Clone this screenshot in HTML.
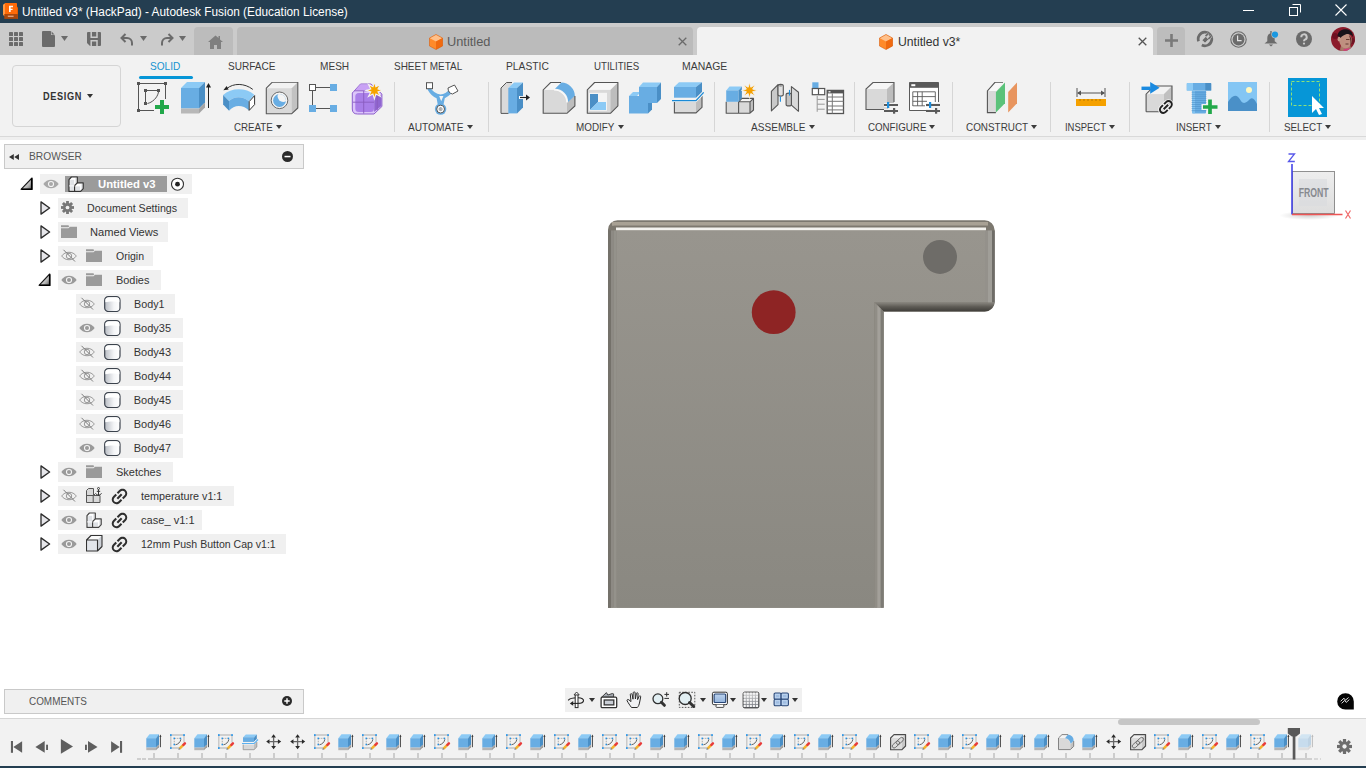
<!DOCTYPE html><html><head><meta charset="utf-8"><title>Fusion</title><style>
*{margin:0;padding:0;box-sizing:border-box}
html,body{width:1366px;height:768px;overflow:hidden;background:#fff;font-family:"Liberation Sans",sans-serif;position:relative}
.a{position:absolute;display:block}
.t{position:absolute;white-space:nowrap;line-height:1}
</style></head><body>
<div class="a" style="left:0px;top:0px;width:1366px;height:23px;background:#243e51;"></div>
<svg class="a" style="left:2px;top:2px" width="17" height="18" viewBox="0 0 17 18"><path d="M1 2.8L3 1.3V14.5L1 13Z" fill="#ff9a45"/><path d="M3 1H14.2Q15 1 15 1.8V13H3Z" fill="#ff6a08"/><path d="M15 4.5L16 5.5V16.8H15Z" fill="#e55d00"/><path d="M2.3 12H15.9V16.9H2.3Z" fill="#a9470c"/><path d="M7 3.7H11V5.2H8.7V6.7H10.6V8.1H8.7V10H7Z" fill="#fff6f0"/><path d="M5.8 13.6H11.6V15H5.8Z" fill="#e8b090" opacity="0.85"/></svg>
<div id="t0" class="t" style="left:22.34px;top:6px;font-size:12px;color:#ffffff;font-weight:normal;transform:scaleX(0.9866);transform-origin:0 0;">Untitled v3* (HackPad) - Autodesk Fusion (Education License)</div>
<div class="a" style="left:1243px;top:10px;width:11px;height:1px;background:#ffffff;"></div>
<svg class="a" style="left:1289px;top:4px" width="12" height="12" viewBox="0 0 12 12"><path d="M3.5 0.5H11.5V8.5" fill="none" stroke="#fff"/><rect x="0.5" y="3.5" width="8" height="8" fill="none" stroke="#fff"/></svg>
<svg class="a" style="left:1335px;top:4px" width="12" height="12" viewBox="0 0 12 12"><path d="M0.5 0.5L11.5 11.5M11.5 0.5L0.5 11.5" stroke="#fff" stroke-width="1.1"/></svg>
<div class="a" style="left:0px;top:23px;width:1366px;height:32px;background:#cbcbcb;"></div>
<svg class="a" style="left:9px;top:32px" width="14" height="14" viewBox="0 0 14 14"><rect x="0" y="0" width="4" height="4" rx="0.6" fill="#6b6b6b"/><rect x="0" y="5" width="4" height="4" rx="0.6" fill="#6b6b6b"/><rect x="0" y="10" width="4" height="4" rx="0.6" fill="#6b6b6b"/><rect x="5" y="0" width="4" height="4" rx="0.6" fill="#6b6b6b"/><rect x="5" y="5" width="4" height="4" rx="0.6" fill="#6b6b6b"/><rect x="5" y="10" width="4" height="4" rx="0.6" fill="#6b6b6b"/><rect x="10" y="0" width="4" height="4" rx="0.6" fill="#6b6b6b"/><rect x="10" y="5" width="4" height="4" rx="0.6" fill="#6b6b6b"/><rect x="10" y="10" width="4" height="4" rx="0.6" fill="#6b6b6b"/></svg>
<svg class="a" style="left:42px;top:31px" width="13" height="16" viewBox="0 0 13 16"><path d="M1 0H8.5L13 4.5V15a1 1 0 0 1-1 1H1a1 1 0 0 1-1-1V1a1 1 0 0 1 1-1Z" fill="#6b6b6b"/><path d="M9 0.3V4H12.7Z" fill="#cbcbcb"/><path d="M9.6 0.6L12.4 3.4H9.6Z" fill="#6b6b6b"/></svg>
<svg class="a" style="left:61px;top:36px" width="7" height="5" viewBox="0 0 7 5"><path d="M0 0H7L3.5 5Z" fill="#6b6b6b"/></svg>
<svg class="a" style="left:87px;top:32px" width="14" height="14" viewBox="0 0 14 14"><path d="M1 0H13a1 1 0 0 1 1 1V13a1 1 0 0 1-1 1H3L0 11V1a1 1 0 0 1 1-1Z" fill="#6b6b6b"/><path d="M4.2 0V5.3H10V0" fill="none" stroke="#cbcbcb" stroke-width="1.5"/><path d="M4.2 14V8.8H10V14" fill="none" stroke="#cbcbcb" stroke-width="1.5"/></svg>
<svg class="a" style="left:120px;top:33px" width="14" height="13" viewBox="0 0 14 13"><path d="M12 12.5V10A5 5 0 0 0 7 5H2" fill="none" stroke="#6b6b6b" stroke-width="2"/><path d="M5.5 1L1.5 5L5.5 9" fill="none" stroke="#6b6b6b" stroke-width="2"/></svg>
<svg class="a" style="left:140px;top:36px" width="7" height="5" viewBox="0 0 7 5"><path d="M0 0H7L3.5 5Z" fill="#6b6b6b"/></svg>
<svg class="a" style="left:160px;top:33px" width="14" height="13" viewBox="0 0 14 13"><path d="M2 12.5V10A5 5 0 0 1 7 5H12" fill="none" stroke="#6b6b6b" stroke-width="2"/><path d="M8.5 1L12.5 5L8.5 9" fill="none" stroke="#6b6b6b" stroke-width="2"/></svg>
<svg class="a" style="left:179px;top:36px" width="7" height="5" viewBox="0 0 7 5"><path d="M0 0H7L3.5 5Z" fill="#6b6b6b"/></svg>
<div class="a" style="left:194px;top:27px;width:39px;height:28px;background:#bcbcbc;border-radius:4px 4px 0 0"></div>
<svg class="a" style="left:208px;top:35px" width="15" height="14" viewBox="0 0 15 14"><path d="M7.5 0.5L0 7H2V14H6V10H9V14H13V7H15L12 4.4V1H10.5V3.1Z" fill="#7f7f7f"/></svg>
<div class="a" style="left:237px;top:27px;width:456px;height:28px;background:#bbbbbb;border-radius:4px 4px 0 0"></div>
<svg class="a" style="left:429px;top:34px" width="14" height="16" viewBox="0 0 14 16"><path d="M7 0.5L13.5 4V12L7 15.5L0.5 12V4Z" fill="#ff8a2a"/><path d="M7 0.5L13.5 4L7 7.5L0.5 4Z" fill="#ffc08a"/><path d="M7 7.5L13.5 4V12L7 15.5Z" fill="#f06a10"/><path d="M7 0.5L13.5 4V12L7 15.5L0.5 12V4Z" fill="none" stroke="#d86010" stroke-width="0.6"/></svg>
<div id="t1" class="t" style="left:447.48px;top:36px;font-size:12.5px;color:#5a5a5a;font-weight:normal;transform:scaleX(1.0247);transform-origin:0 0;">Untitled</div>
<svg class="a" style="left:677.5px;top:36.5px" width="9" height="9" viewBox="0 0 9 9"><path d="M0.7 0.7L8.3 8.3M8.3 0.7L0.7 8.3" stroke="#6a6a6a" stroke-width="1.3"/></svg>
<div class="a" style="left:697px;top:27px;width:456px;height:28px;background:#f2f2f2;border-radius:4px 4px 0 0"></div>
<svg class="a" style="left:879px;top:34px" width="14" height="16" viewBox="0 0 14 16"><path d="M7 0.5L13.5 4V12L7 15.5L0.5 12V4Z" fill="#ff8a2a"/><path d="M7 0.5L13.5 4L7 7.5L0.5 4Z" fill="#ffc08a"/><path d="M7 7.5L13.5 4V12L7 15.5Z" fill="#f06a10"/><path d="M7 0.5L13.5 4V12L7 15.5L0.5 12V4Z" fill="none" stroke="#d86010" stroke-width="0.6"/></svg>
<div id="t2" class="t" style="left:897.62px;top:36px;font-size:12.5px;color:#333;font-weight:normal;transform:scaleX(0.9756);transform-origin:0 0;">Untitled v3*</div>
<svg class="a" style="left:1137.5px;top:36.5px" width="9" height="9" viewBox="0 0 9 9"><path d="M0.7 0.7L8.3 8.3M8.3 0.7L0.7 8.3" stroke="#555" stroke-width="1.3"/></svg>
<div class="a" style="left:1157px;top:27px;width:28px;height:28px;background:#bdbdbd;border-radius:4px 4px 0 0"></div>
<svg class="a" style="left:1165px;top:34px" width="13" height="13" viewBox="0 0 13 13"><path d="M6.5 0V13M0 6.5H13" stroke="#7a7a7a" stroke-width="2.6"/></svg>
<svg class="a" style="left:1196px;top:30px" width="18" height="18" viewBox="0 0 18 18"><path d="M2.61 11.33A6.8 6.8 0 1 1 5.81 15.00" fill="none" stroke="#6b6b6b" stroke-width="2.7"/><path d="M6 10.2L9.8 6.4L12.8 9.4L9 13.2Z" fill="#6b6b6b" stroke="#cbcbcb" stroke-width="0.9"/><path d="M9.6 6.2L12.4 3.4M12.4 9L15.2 6.2" stroke="#cbcbcb" stroke-width="2.6"/><path d="M9.6 6.2L12.4 3.4M12.4 9L15.2 6.2" stroke="#6b6b6b" stroke-width="1.7"/></svg>
<svg class="a" style="left:1230px;top:31px" width="17" height="17" viewBox="0 0 17 17"><circle cx="8.5" cy="8.5" r="7.7" fill="none" stroke="#6b6b6b" stroke-width="1.1"/><circle cx="8.5" cy="8.5" r="5.9" fill="#6b6b6b"/><path d="M7.6 4.6V9.6H11.6" fill="none" stroke="#e4e4e4" stroke-width="1.2"/></svg>
<svg class="a" style="left:1263px;top:30px" width="17" height="18" viewBox="0 0 17 18"><path d="M8 3.2C5.5 3.5 4.3 5.6 4.3 8V11.2L1.5 13.6H14.5L11.7 11.2V8C11.7 5.6 10.5 3.5 8 3.2Z" fill="#6b6b6b"/><rect x="7.3" y="1" width="1.4" height="3" fill="#6b6b6b"/><path d="M5.8 14.5H10.2L8 16.6Z" fill="#6b6b6b"/><circle cx="12" cy="4.6" r="3.6" fill="#cbcbcb"/><circle cx="12" cy="4.6" r="3.1" fill="#1b98e0"/></svg>
<svg class="a" style="left:1296px;top:31px" width="16" height="16" viewBox="0 0 16 16"><circle cx="8" cy="8" r="8" fill="#6b6b6b"/><path d="M5.3 6.2A2.7 2.7 0 1 1 8.9 8.6C8.2 9 8 9.4 8 10.3" fill="none" stroke="#cbcbcb" stroke-width="2"/><circle cx="8" cy="12.6" r="1.1" fill="#cbcbcb"/></svg>
<svg class="a" style="left:1331px;top:27px" width="24" height="24" viewBox="0 0 24 24"><defs><clipPath id="avc"><circle cx="12" cy="12" r="12"/></clipPath></defs><g clip-path="url(#avc)"><rect width="24" height="24" fill="#8c1b2b"/><circle cx="4" cy="9" r="3" fill="#6e1020"/><circle cx="21" cy="14" r="3" fill="#701424"/><path d="M9 25C9 20 10 18 12 17H19C20 19 21 22 21 25Z" fill="#a87868"/><path d="M13 22L20 21L22 25H12Z" fill="#d23c7c"/><ellipse cx="14.5" cy="13.5" rx="6.2" ry="7.8" fill="#bf9080"/><path d="M18 8C21 10 21 17 19 21C20 17 19.5 12 18 8Z" fill="#5a2a28"/><ellipse cx="8.2" cy="12.2" rx="1.6" ry="2.4" fill="#c49888"/><path d="M6.5 9C7 3.5 12 1.5 16.5 2.5C20 3.2 22 6 22 10C20 7 17 6.5 14.5 7.5C12 8.5 11 9 9.5 11C9 10 8 9.5 6.5 9Z" fill="#18131a"/><path d="M15 12.5H18.5M14.5 17H17.5" stroke="#5a3028" stroke-width="0.9"/></g></svg>
<div class="a" style="left:0px;top:55px;width:1366px;height:82px;background:#f2f2f2;"></div>
<div class="a" style="left:0px;top:136px;width:1366px;height:1px;background:#d9d9d9;"></div>
<div class="a" style="left:0px;top:137px;width:1366px;height:3px;background:#efefef;"></div>
<div class="a" style="left:12px;top:65px;width:109px;height:62px;border:1px solid #d5d5d5;border-radius:4px"></div>
<div id="t3" class="t" style="left:42.57px;top:91px;font-size:11px;color:#333;font-weight:bold;transform:scaleX(0.8335);transform-origin:0 0;letter-spacing:0.8px;">DESIGN</div>
<svg class="a" style="left:87px;top:94px" width="6" height="4" viewBox="0 0 6 4"><path d="M0 0H6L3.0 4Z" fill="#333"/></svg>
<div id="t4" class="t" style="left:150.04px;top:61px;font-size:11px;color:#1592d0;font-weight:normal;transform:scaleX(0.9156);transform-origin:0 0;">SOLID</div>
<div id="t5" class="t" style="left:227.54px;top:61px;font-size:11px;color:#3c3c3c;font-weight:normal;transform:scaleX(0.9157);transform-origin:0 0;">SURFACE</div>
<div id="t6" class="t" style="left:320.20px;top:61px;font-size:11px;color:#3c3c3c;font-weight:normal;transform:scaleX(0.9167);transform-origin:0 0;">MESH</div>
<div id="t7" class="t" style="left:393.55px;top:61px;font-size:11px;color:#3c3c3c;font-weight:normal;transform:scaleX(0.9060);transform-origin:0 0;">SHEET METAL</div>
<div id="t8" class="t" style="left:506.18px;top:61px;font-size:11px;color:#3c3c3c;font-weight:normal;transform:scaleX(0.9348);transform-origin:0 0;">PLASTIC</div>
<div id="t9" class="t" style="left:594.23px;top:61px;font-size:11px;color:#3c3c3c;font-weight:normal;transform:scaleX(0.8800);transform-origin:0 0;">UTILITIES</div>
<div id="t10" class="t" style="left:682.17px;top:61px;font-size:11px;color:#3c3c3c;font-weight:normal;transform:scaleX(0.9488);transform-origin:0 0;">MANAGE</div>
<div class="a" style="left:138.5px;top:75.5px;width:54.5px;height:3px;background:#0696d7;border-radius:1.5px"></div>
<div id="t11" class="t" style="left:233.56px;top:122px;font-size:11px;color:#3c3c3c;font-weight:normal;transform:scaleX(0.8863);transform-origin:0 0;">CREATE</div>
<svg class="a" style="left:276px;top:125px" width="6" height="4" viewBox="0 0 6 4"><path d="M0 0H6L3.0 4Z" fill="#3c3c3c"/></svg>
<div id="t12" class="t" style="left:408.00px;top:122px;font-size:11px;color:#3c3c3c;font-weight:normal;transform:scaleX(0.9224);transform-origin:0 0;">AUTOMATE</div>
<svg class="a" style="left:467px;top:125px" width="6" height="4" viewBox="0 0 6 4"><path d="M0 0H6L3.0 4Z" fill="#3c3c3c"/></svg>
<div id="t13" class="t" style="left:575.91px;top:122px;font-size:11px;color:#3c3c3c;font-weight:normal;transform:scaleX(0.8982);transform-origin:0 0;">MODIFY</div>
<svg class="a" style="left:618px;top:125px" width="6" height="4" viewBox="0 0 6 4"><path d="M0 0H6L3.0 4Z" fill="#3c3c3c"/></svg>
<div id="t14" class="t" style="left:751.00px;top:122px;font-size:11px;color:#3c3c3c;font-weight:normal;transform:scaleX(0.9172);transform-origin:0 0;">ASSEMBLE</div>
<svg class="a" style="left:809px;top:125px" width="6" height="4" viewBox="0 0 6 4"><path d="M0 0H6L3.0 4Z" fill="#3c3c3c"/></svg>
<div id="t15" class="t" style="left:867.56px;top:122px;font-size:11px;color:#3c3c3c;font-weight:normal;transform:scaleX(0.8846);transform-origin:0 0;">CONFIGURE</div>
<svg class="a" style="left:929px;top:125px" width="6" height="4" viewBox="0 0 6 4"><path d="M0 0H6L3.0 4Z" fill="#3c3c3c"/></svg>
<div id="t16" class="t" style="left:966.05px;top:122px;font-size:11px;color:#3c3c3c;font-weight:normal;transform:scaleX(0.8995);transform-origin:0 0;">CONSTRUCT</div>
<svg class="a" style="left:1031px;top:125px" width="6" height="4" viewBox="0 0 6 4"><path d="M0 0H6L3.0 4Z" fill="#3c3c3c"/></svg>
<div id="t17" class="t" style="left:1064.74px;top:122px;font-size:11px;color:#3c3c3c;font-weight:normal;transform:scaleX(0.8581);transform-origin:0 0;">INSPECT</div>
<svg class="a" style="left:1109px;top:125px" width="6" height="4" viewBox="0 0 6 4"><path d="M0 0H6L3.0 4Z" fill="#3c3c3c"/></svg>
<div id="t18" class="t" style="left:1176.41px;top:122px;font-size:11px;color:#3c3c3c;font-weight:normal;transform:scaleX(0.8875);transform-origin:0 0;">INSERT</div>
<svg class="a" style="left:1215px;top:125px" width="6" height="4" viewBox="0 0 6 4"><path d="M0 0H6L3.0 4Z" fill="#3c3c3c"/></svg>
<div id="t19" class="t" style="left:1283.55px;top:122px;font-size:11px;color:#3c3c3c;font-weight:normal;transform:scaleX(0.8926);transform-origin:0 0;">SELECT</div>
<svg class="a" style="left:1325px;top:125px" width="6" height="4" viewBox="0 0 6 4"><path d="M0 0H6L3.0 4Z" fill="#3c3c3c"/></svg>
<div class="a" style="left:394px;top:82px;width:1px;height:50px;background:#d6d6d6;"></div>
<div class="a" style="left:488px;top:82px;width:1px;height:50px;background:#d6d6d6;"></div>
<div class="a" style="left:714px;top:82px;width:1px;height:50px;background:#d6d6d6;"></div>
<div class="a" style="left:854px;top:82px;width:1px;height:50px;background:#d6d6d6;"></div>
<div class="a" style="left:952px;top:82px;width:1px;height:50px;background:#d6d6d6;"></div>
<div class="a" style="left:1050px;top:82px;width:1px;height:50px;background:#d6d6d6;"></div>
<div class="a" style="left:1129px;top:82px;width:1px;height:50px;background:#d6d6d6;"></div>
<div class="a" style="left:1269px;top:82px;width:1px;height:50px;background:#d6d6d6;"></div>
<svg class="a" style="left:137px;top:82px" width="33" height="33" viewBox="0 0 33 33"><g fill="#555"><rect x="0" y="0" width="3" height="3"/><rect x="27" y="0" width="3" height="3"/><rect x="0" y="27" width="3" height="3"/><rect x="7" y="7" width="3" height="3"/><rect x="20" y="7" width="3" height="3"/><rect x="7" y="20" width="3" height="3"/></g><path d="M3 1.5H27M1.5 3V27M28.5 3V17M3 28.5H17M8.5 10V20M10 8.5H20" stroke="#555" stroke-width="1"/><path d="M10.5 21.5C15 20.5 20.5 16 21.5 10" fill="none" stroke="#555" stroke-width="1"/><path d="M25 18V32M18 25H32" stroke="#f2f2f2" stroke-width="6"/><path d="M25 18V32M18 25H32" stroke="#22a84a" stroke-width="4"/></svg>
<svg class="a" style="left:180px;top:82px" width="33" height="33" viewBox="0 0 33 33"><path d="M1 6L7 0H25L19 6Z" fill="#8ccaf5"/><path d="M1 6H19V26.5H1Z" fill="#68ade3"/><path d="M19 6L25 0V20.5L19 26.5Z" fill="#4a8fc6"/><path d="M1 26.5H19V31.5H1Z" fill="#b8b8b8"/><path d="M19 26.5L25 20.5V25.5L19 31.5Z" fill="#a5a5a5"/><path d="M28.5 26V4" stroke="#222" stroke-width="1"/><path d="M26 5.5L28.5 1L31 5.5Z" fill="#222"/></svg>
<svg class="a" style="left:222px;top:82px" width="34" height="33" viewBox="0 0 34 33"><path d="M4.5 6.8C11.5 0.8 22.5 1 30.8 7.4" fill="none" stroke="#333" stroke-width="1"/><path d="M1.4 8.2L4.6 3.9L6.6 7.6Z" fill="#222"/><path d="M1.1 13.1C9 5.5 24 5.5 32.3 12.8L26.9 19.3C21 13.8 12 13.8 7 19Z" fill="#8ccaf5"/><path d="M7 19C12 13.8 21 13.8 26.9 19.3V28.4C21 22.5 12 22.5 7.1 28.7Z" fill="#68ade3"/><path d="M1.1 13.1L7 19L7.1 28.7L1.1 22.5Z" fill="#4a8fc6"/><path d="M27.2 19.6L32.6 13.6V22.6L27.2 28.4Z" fill="#fff" stroke="#333" stroke-width="1" stroke-linejoin="round"/></svg>
<svg class="a" style="left:265px;top:82px" width="34" height="33" viewBox="0 0 34 33"><path d="M1.3 6.2L7.3 0.2H32.8V26L26.8 31.7H1.3Z" fill="#d9d9d9"/><path d="M1.3 6.2L7.3 0.2H32.8L26.8 6.2Z" fill="#f2f2f2"/><path d="M26.8 6.2L32.8 0.2V26L26.8 31.7Z" fill="#c2c2c2"/><path d="M1.3 6.2L7.3 0.2H32.8V26L26.8 31.7H1.3Z" fill="none" stroke="#5a5a5a" stroke-width="1.1" stroke-linejoin="round"/><defs><clipPath id="hc"><circle cx="14.5" cy="18.5" r="6.4"/></clipPath></defs><circle cx="14.5" cy="18.3" r="8.3" fill="#f4f4f4" stroke="#5a5a5a" stroke-width="0.9"/><g clip-path="url(#hc)"><rect x="7" y="11" width="15" height="15" fill="#68ade3"/><circle cx="18.2" cy="14.3" r="5.6" fill="#f4f4f4"/></g></svg>
<svg class="a" style="left:308px;top:82px" width="32" height="32" viewBox="0 0 32 32"><path d="M8 5.5H22M4.5 9V23M8 26.5H22" stroke="#555" stroke-width="1"/><rect x="1.5" y="2.5" width="6" height="6" fill="#fff" stroke="#555" stroke-width="1"/><rect x="22" y="2" width="7" height="7" fill="#68ade3"/><rect x="1" y="23" width="7" height="7" fill="#68ade3"/><rect x="22" y="23" width="7" height="7" fill="#68ade3"/></svg>
<svg class="a" style="left:351px;top:82px" width="34" height="33" viewBox="0 0 34 33"><path d="M1.3 11L9.5 2H20L30.9 12V24.5L23 32H6.5Q1.3 32 1.3 27Z" fill="#dcc6fa" stroke="#8d5fcc" stroke-width="1"/><path d="M2 10.5L9.5 2.5H20L26 8.5H3Z" fill="#c9a2f5"/><rect x="4.3" y="11.1" width="18.7" height="18.8" rx="3.5" fill="#a97ee8"/><path d="M23.2 13V30L30.4 24V13.5Z" fill="#9066d0"/><path d="M12.7 9V31.5M1.8 20.2H23M26.3 12V28M3 8.8H22" stroke="#8a5cc0" stroke-width="0.9" fill="none"/><path d="M23.40 0.00L24.89 4.80L29.34 2.46L27.00 6.91L31.80 8.40L27.00 9.89L29.34 14.34L24.89 12.00L23.40 16.80L21.91 12.00L17.46 14.34L19.80 9.89L15.00 8.40L19.80 6.91L17.46 2.46L21.91 4.80Z" fill="#f5a300" stroke="#f2f2f2" stroke-width="1.1"/></svg>
<svg class="a" style="left:425px;top:82px" width="34" height="33" viewBox="0 0 34 33"><path d="M4.5 4.5Q9 12 15.5 12.4Q21 12 24 7.5L27 11Q22.5 15 19.8 16.2L18.2 24H13L11.6 16.2Q6.5 14.5 2.5 7.5Z" fill="#68ade3"/><path d="M14.2 13.9L18.4 13.9L16.2 19.2Z" fill="#f4f4f4"/><circle cx="15.6" cy="27.1" r="5.7" fill="#68ade3"/><circle cx="15.6" cy="27.1" r="3.9" fill="#fff" stroke="#555" stroke-width="1"/><circle cx="15.6" cy="27.1" r="1.6" fill="none" stroke="#777" stroke-width="0.6"/><path d="M15.6 25.5V28.7M14 27.1H17.2" stroke="#777" stroke-width="0.5"/><rect x="1.5" y="0.7" width="6" height="6" fill="#fff" stroke="#555" stroke-width="1"/><path d="M23 6L29.5 3L33 9L27.5 12Q23 11 23 6Z" fill="#fff" stroke="#555" stroke-width="1"/></svg>
<svg class="a" style="left:500px;top:82px" width="32" height="32" viewBox="0 0 32 32"><path d="M8.5 31.4H1V6L6.5 0.5H12" fill="#dadada" stroke="#555" stroke-width="1"/><path d="M8.3 6L14 0.5H23L17 6Z" fill="#8ccaf5"/><path d="M8.3 6H17V31.4H8.3Z" fill="#68ade3"/><path d="M17 6L23 0.5V25.5L17 31.4Z" fill="#4a8fc6"/><path d="M19 15.5H26" stroke="#fff" stroke-width="3"/><path d="M20 15.5H27" stroke="#222" stroke-width="1.2"/><path d="M26 12.5L30 15.5L26 18.5Z" fill="#222"/></svg>
<svg class="a" style="left:542px;top:82px" width="34" height="33" viewBox="0 0 34 33"><path d="M1.2 7.9L8.6 0.5H19.4L13 6.8Z" fill="#f6f6f6"/><path d="M1.2 7.9H12A13 13 0 0 1 25 20.5V31.3H1.2Z" fill="#d9d9d9"/><path d="M25 20.5L32.9 13.5V24.3L25 31.3Z" fill="#bdbdbd"/><path d="M19.4 0.5A14 14 0 0 1 32.9 13.7L26.1 20A13 13 0 0 0 13 6.8Z" fill="#68ade3"/><path d="M12 7.9A13 13 0 0 1 25 20.5" fill="none" stroke="#fafafa" stroke-width="1.3"/><path d="M19 0.5H8.6L1.2 7.9V31.3H25L32.9 24V14" fill="none" stroke="#555" stroke-width="1.1"/></svg>
<svg class="a" style="left:586px;top:82px" width="33" height="33" viewBox="0 0 33 33"><path d="M1.3 7.9L8.6 0.5H31.9L24.4 7.9Z" fill="#f7f7f7"/><path d="M1.3 7.9H24.4V31.3H1.3Z" fill="#d9d9d9"/><path d="M24.4 7.9L31.9 0.5V23.8L24.4 31.3Z" fill="#bdbdbd"/><path d="M1.3 7.9L8.6 0.5H31.9V23.8L24.4 31.3H1.3Z" fill="none" stroke="#555" stroke-width="1.1" stroke-linejoin="round"/><rect x="3" y="10.8" width="18" height="18" fill="#f4f4f4"/><path d="M4 12H12V20L4 28Z" fill="#4a8fc6"/><path d="M12 20H20V28H4Z" fill="#8ccaf5"/></svg>
<svg class="a" style="left:629px;top:82px" width="32" height="32" viewBox="0 0 32 32"><path d="M10 5L14 0.5H32L28 5Z" fill="#8ccaf5"/><path d="M0 14L4 10H12L8 14Z" fill="#8ccaf5"/><path d="M10 5H28V21H19V31.5H0V14H10Z" fill="#68ade3"/><path d="M28 5L32 0.5V17L28 21Z" fill="#4a8fc6"/><path d="M19 21H23V27.5L19 31.5Z" fill="#4a8fc6"/></svg>
<svg class="a" style="left:671px;top:82px" width="34" height="32" viewBox="0 0 34 32"><path d="M3 5L8 0.3H31L25 5Z" fill="#8ccaf5"/><path d="M3 5H25V15.7H3Z" fill="#68ade3"/><path d="M25 5L31 0.3V10L25 15.7Z" fill="#4a8fc6"/><path d="M3.4 18.5H25V30.9H3.4Z" fill="#dadada"/><path d="M25 18.5L31 13V25.3L25 30.9Z" fill="#bdbdbd"/><path d="M3.4 18.5V30.9H25L31 25.3V13" fill="none" stroke="#555" stroke-width="1.1"/><path d="M0.5 18.6H25L33 10.4" fill="none" stroke="#f2f2f2" stroke-width="3"/><path d="M1 18.6H25L32.7 10.4" fill="none" stroke="#1a8ad6" stroke-width="1.3"/></svg>
<svg class="a" style="left:725px;top:82px" width="34" height="33" viewBox="0 0 34 33"><path d="M13.6 19.8L16.9 16.4H28.5L25 19.8Z" fill="#f4f4f4"/><path d="M1.2 19.8H25V31.2H1.2Z" fill="#d9d9d9"/><path d="M25 19.8L28.5 16.4V28L25 31.2Z" fill="#c2c2c2"/><path d="M1.2 19.8V31.2H25L28.5 28V16.4H16.9L13.6 19.8 M13.6 19.8V31.2 M25 19.8V31.2 M13.6 19.8H25L28.5 16.4" fill="none" stroke="#555" stroke-width="1.1" stroke-linejoin="round"/><path d="M1.2 8.4L4.5 4.4H16.9L13.6 8.4Z" fill="#8ccaf5"/><path d="M1.2 8.4H13.6V19.8H1.2Z" fill="#68ade3"/><path d="M13.6 8.4L16.9 4.4V16L13.6 19.8Z" fill="#4a8fc6"/><path d="M24.50 0.40L25.80 5.26L30.16 2.74L27.64 7.10L32.50 8.40L27.64 9.70L30.16 14.06L25.80 11.54L24.50 16.40L23.20 11.54L18.84 14.06L21.36 9.70L16.50 8.40L21.36 7.10L18.84 2.74L23.20 5.26Z" fill="#f5a000" stroke="#f2f2f2" stroke-width="0.9"/></svg>
<svg class="a" style="left:770px;top:82px" width="31" height="33" viewBox="0 0 31 33"><path d="M1.4 9.3L8 2.7V22.6L1.4 28.8Z" fill="#c9c9c9" stroke="#555" stroke-width="1.1" stroke-linejoin="round"/><path d="M8 4C8 1.8 13.3 1.8 13.3 4V12.6C13.3 14.6 8 14.6 8 12.6Z" fill="#e2e2e2" stroke="#555" stroke-width="1.1"/><ellipse cx="10.65" cy="3.8" rx="1.8" ry="0.9" fill="#999"/><path d="M10.4 14.6V19.8" stroke="#1b8fe0" stroke-width="1.1"/><path d="M21.4 4.6L28.5 10.3V29.3L21.4 23.1Z" fill="#d9d9d9" stroke="#555" stroke-width="1.1" stroke-linejoin="round"/><path d="M16.1 12.6C16.1 10.6 21.4 10.6 21.4 12.6V22.4C21.4 24.4 16.1 24.4 16.1 22.4Z" fill="#c4c4c4" stroke="#555" stroke-width="1.1"/><path d="M19.5 7.9V13.6" stroke="#1b8fe0" stroke-width="1.1"/></svg>
<svg class="a" style="left:811px;top:82px" width="34" height="33" viewBox="0 0 34 33"><rect x="1.3" y="0.3" width="6.2" height="6.2" fill="#68ade3"/><rect x="1.3" y="6.5" width="12.4" height="6.2" fill="#fff" stroke="#555" stroke-width="1.2"/><path d="M7.5 6.5V12.7" stroke="#555" stroke-width="1.2"/><path d="M6.2 14V29.8M6.2 17.4H13.7M6.2 22.2H13.7M6.2 27.2H13.7" stroke="#999" stroke-width="1"/><rect x="16.2" y="8.4" width="16.3" height="23.1" fill="#fff" stroke="#555" stroke-width="1.3"/><rect x="16.2" y="8.4" width="16.3" height="3" fill="#555"/><rect x="17.5" y="9.2" width="2" height="1.2" fill="#fff"/><path d="M16.2 15H32.5M16.2 19.3H32.5M16.2 24H32.5M16.2 27.9H32.5M21.3 11.4V31.5" stroke="#777" stroke-width="1"/></svg>
<svg class="a" style="left:865px;top:82px" width="34" height="33" viewBox="0 0 34 33"><path d="M1 7L8 0.5H29L22 7Z" fill="#f6f6f6"/><path d="M1 7H22V27.5H1Z" fill="#d9d9d9"/><path d="M22 7L29 0.5V21L22 27.5Z" fill="#bdbdbd"/><path d="M21 27.5H1V7L8 0.5H29V20" fill="none" stroke="#5a5a5a" stroke-width="1.1"/><path d="M19 23H33M19 29H33" stroke="#f2f2f2" stroke-width="4"/><path d="M19 23H33M19 29H33" stroke="#5a5a5a" stroke-width="1.8"/><rect x="22" y="20" width="2.2" height="6" fill="#1b8fe0"/><rect x="28" y="26" width="2.2" height="5.7" fill="#5a5a5a"/></svg>
<svg class="a" style="left:909px;top:82px" width="34" height="33" viewBox="0 0 34 33"><path d="M19 28.5H0.5V0.5H29.5V20" fill="#fff" stroke="#5a5a5a" stroke-width="1"/><rect x="0.5" y="0.5" width="29" height="5.3" fill="#5a5a5a"/><rect x="2.3" y="2.2" width="4" height="2" fill="#fff"/><path d="M3.8 9.8H26.3V20M3.8 9.8V24M3.8 14.6H26.3M3.8 19.3H18M3.8 23.8H16M8.6 9.8V23.8M13.2 9.8V23.8" fill="none" stroke="#5a5a5a" stroke-width="0.9"/><path d="M17 23H31M17 29H31" stroke="#f2f2f2" stroke-width="4"/><path d="M17 23H31M17 29H31" stroke="#5a5a5a" stroke-width="1.8"/><rect x="20" y="20" width="2.2" height="6" fill="#1b8fe0"/><rect x="26" y="26" width="2.2" height="5.7" fill="#5a5a5a"/></svg>
<svg class="a" style="left:986px;top:82px" width="32" height="32" viewBox="0 0 32 32"><path d="M1.4 9L9 0.3H17L9.9 9Z" fill="#f8f8f8"/><path d="M1.4 9H9.9V30.6H1.4Z" fill="#d9d9d9"/><path d="M9.9 30.6H1.4V9L9 0.3H17" fill="none" stroke="#555" stroke-width="1.1"/><path d="M9.9 10L19 0.5V21.2L9.9 30.6Z" fill="#5bc27a"/><path d="M22.2 10L31 0.5V21.2L22.2 30.6Z" fill="#e8955f"/></svg>
<svg class="a" style="left:1076px;top:88px" width="30" height="18" viewBox="0 0 30 18"><path d="M1 0V9M29 0V9M2 5H28" stroke="#555" stroke-width="1"/><path d="M1 5L5 2.5V7.5Z M29 5L25 2.5V7.5Z" fill="#555"/><rect x="0" y="11" width="30" height="7" fill="#f5a100"/><path d="M4 11V13M8 11V13M12 11V13M16 11V13M20 11V13M24 11V13" stroke="#8a5a00" stroke-width="0.6"/></svg>
<svg class="a" style="left:1141px;top:82px" width="34" height="33" viewBox="0 0 34 33"><path d="M5.1 12.1H23V29.7H5.1Z" fill="#d9d9d9"/><path d="M5.1 12.1L13 4H31L23 12.1Z" fill="#f2f2f2"/><path d="M23 12.1L31 4V21L23 29Z" fill="#c0c0c0"/><path d="M5.1 29.7V12.1L13 4H31V21M5.1 29.7H19" fill="none" stroke="#555" stroke-width="1.1"/><path d="M0.5 4.6H9.6V8H0.5Z" fill="#1a8ae0"/><path d="M9.2 0.1L18.6 5.8L9.2 11.7Z" fill="#1a8ae0"/><g transform="translate(24.9 25) rotate(-45) scale(0.8) translate(-12 -12)"><path d="M2 12C2 9 4.5 6.6 7.5 6.6H11V9H7.5C5.8 9 4.4 10.3 4.4 12S5.8 15 7.5 15H11V17.4H7.5C4.5 17.4 2 15 2 12ZM13 6.6H16.5C19.5 6.6 22 9 22 12S19.5 17.4 16.5 17.4H13V15H16.5C18.2 15 19.6 13.7 19.6 12S18.2 9 16.5 9H13ZM8 10.8H16V13.2H8Z" fill="#f2f2f2" stroke="#f2f2f2" stroke-width="2.2"/><path d="M2 12C2 9 4.5 6.6 7.5 6.6H11V9H7.5C5.8 9 4.4 10.3 4.4 12S5.8 15 7.5 15H11V17.4H7.5C4.5 17.4 2 15 2 12ZM13 6.6H16.5C19.5 6.6 22 9 22 12S19.5 17.4 16.5 17.4H13V15H16.5C18.2 15 19.6 13.7 19.6 12S18.2 9 16.5 9H13ZM8 10.8H16V13.2H8Z" fill="#222"/></g></svg>
<svg class="a" style="left:1186px;top:82px" width="33" height="33" viewBox="0 0 33 33"><path d="M1.5 1H24.5Q25.2 1 25.2 1.8V8.6H0.8V1.8Q0.8 1 1.5 1Z" fill="#68ade3"/><path d="M0.8 1.8Q0.8 1 1.5 1H7V8.6H0.8Z" fill="#8ccaf5"/><path d="M19.3 1H24.5Q25.2 1 25.2 1.8V8.6H19.3Z" fill="#4a8fc6"/><path d="M6 8.6H20V30.6Q20 31.6 19 31.6H7Q6 31.6 6 30.6Z" fill="#68ade3"/><path d="M6 8.6H9V31.6H7Q6 31.6 6 30.6Z" fill="#8ccaf5" opacity="0.7"/><path d="M5.6 10.2H20.4" stroke="#4e93cc" stroke-width="0.8" opacity="0.8"/><path d="M5.6 12.25H20.4" stroke="#4e93cc" stroke-width="0.8" opacity="0.8"/><path d="M5.6 14.299999999999999H20.4" stroke="#4e93cc" stroke-width="0.8" opacity="0.8"/><path d="M5.6 16.349999999999998H20.4" stroke="#4e93cc" stroke-width="0.8" opacity="0.8"/><path d="M5.6 18.4H20.4" stroke="#4e93cc" stroke-width="0.8" opacity="0.8"/><path d="M5.6 20.45H20.4" stroke="#4e93cc" stroke-width="0.8" opacity="0.8"/><path d="M5.6 22.5H20.4" stroke="#4e93cc" stroke-width="0.8" opacity="0.8"/><path d="M5.6 24.549999999999997H20.4" stroke="#4e93cc" stroke-width="0.8" opacity="0.8"/><path d="M5.6 26.599999999999998H20.4" stroke="#4e93cc" stroke-width="0.8" opacity="0.8"/><path d="M5.6 28.65H20.4" stroke="#4e93cc" stroke-width="0.8" opacity="0.8"/><path d="M24 16V33M15.5 25H32.5" stroke="#f2f2f2" stroke-width="6"/><path d="M24 17.5V32M17 25H31.5" stroke="#22a84a" stroke-width="3.7"/></svg>
<svg class="a" style="left:1228px;top:82px" width="30" height="30" viewBox="0 0 30 30"><rect x="0" y="0" width="29" height="29" fill="#84c6f4"/><circle cx="21" cy="8" r="3" fill="#fff8c0"/><path d="M0 20C5 12 9 12 13 19C16 23 19 20 22 17C25 15 27 18 29 22V29H0Z" fill="#4a90c8"/></svg>
<svg class="a" style="left:1288px;top:78px" width="39" height="39" viewBox="0 0 39 39"><rect x="0" y="0" width="39" height="39" fill="#0696d7"/><rect x="3.5" y="3.5" width="28" height="24" fill="none" stroke="#8ee07a" stroke-width="1" stroke-dasharray="3 2"/><path d="M24 18V35L28 31L31 37L34 36L31 30L36 30Z" fill="#fff"/></svg>
<div class="a" style="left:4px;top:144px;width:300px;height:25px;background:#f0f0f0;border:1px solid #c9c9c9"></div>
<svg class="a" style="left:9px;top:154px" width="10" height="6" viewBox="0 0 10 6"><path d="M4.8 0V6L0 3Z M10 0V6L5.2 3Z" fill="#333"/></svg>
<div id="t20" class="t" style="left:28.69px;top:151px;font-size:11px;color:#555;font-weight:normal;transform:scaleX(0.9300);transform-origin:0 0;">BROWSER</div>
<svg class="a" style="left:282px;top:151px" width="11" height="11" viewBox="0 0 11 11"><circle cx="5.5" cy="5.5" r="5.5" fill="#2a2a2a"/><rect x="2.5" y="4.8" width="6" height="1.5" fill="#fff"/></svg>
<div class="a" style="left:40px;top:174px;width:152px;height:20px;background:#f0f0f0;"></div>
<svg class="a" style="left:20px;top:177px" width="13" height="13" viewBox="0 0 13 13"><defs><linearGradient id="tg20177" x1="0.2" y1="0.3" x2="1" y2="1"><stop offset="0" stop-color="#eeeeee"/><stop offset="0.55" stop-color="#b8b8b8"/><stop offset="1" stop-color="#5a5a5a"/></linearGradient></defs><path d="M1 12.3L12 1V12.3Z" fill="url(#tg20177)" stroke="#1a1a1a" stroke-width="1.1" stroke-linejoin="round"/><path d="M11.7 1.3V12.3H1.3" fill="none" stroke="#000" stroke-width="1.6"/></svg>
<svg class="a" style="left:43px;top:177px" width="16" height="14" viewBox="0 0 16 14"><path d="M0.3 7C4 1.3 12 1.3 15.7 7C12 12.7 4 12.7 0.3 7Z" fill="#a8a8a8"/><circle cx="8" cy="7" r="2.55" fill="#a8a8a8" stroke="#f4f4f4" stroke-width="1.1"/></svg>
<div class="a" style="left:65px;top:176px;width:102px;height:16px;background:#9b9b9b;"></div>
<svg class="a" style="left:68px;top:176px" width="17" height="17" viewBox="0 0 17 17"><path d="M1 3.6L3.4 1H9.3V6.8H15.2V12.6L12.6 15.4H1Z" fill="#fff"/><rect x="2.2" y="3.8" width="4" height="5.2" fill="#dfe2e6"/><rect x="2.2" y="10.4" width="4" height="3.8" fill="#dfe2e6"/><rect x="7.6" y="10.4" width="4.4" height="3.8" fill="#dfe2e6"/><path d="M7.8 2V7.5M13.8 8V13" stroke="#dfe2e6" stroke-width="1"/><path d="M1 3.6L3.4 1H9.3V6.8H15.2V12.6L12.6 15.4H1Z" fill="none" stroke="#333" stroke-width="1.2" stroke-linejoin="round"/><path d="M9.3 6.8L6.6 9.5V15.4" fill="none" stroke="#333" stroke-width="1.2"/><path d="M1 9.9H6.6" stroke="#e8eaee" stroke-width="1"/></svg>
<div id="t22" class="t" style="left:97.73px;top:179px;font-size:10.5px;color:#fff;font-weight:bold;transform:scaleX(1.0730);transform-origin:0 0;">Untitled v3</div>
<svg class="a" style="left:171px;top:177px" width="14" height="14" viewBox="0 0 14 14"><circle cx="6.5" cy="7.2" r="6" fill="#fff" stroke="#333" stroke-width="1.1"/><circle cx="6.5" cy="7.2" r="2.4" fill="#222"/></svg>
<div class="a" style="left:58px;top:198px;width:130px;height:20px;background:#f0f0f0;"></div>
<svg class="a" style="left:40px;top:201px" width="11" height="14" viewBox="0 0 11 14"><path d="M1 0.9L9.6 7L1 13.1Z" fill="#e6e6ea" stroke="#2a2a2a" stroke-width="1.3" stroke-linejoin="round"/></svg>
<svg class="a" style="left:61px;top:201px" width="13" height="13" viewBox="0 0 14 14"><rect x="5.5" y="0" width="3" height="3.5" transform="rotate(0 7 7)" fill="#777"/><rect x="5.5" y="0" width="3" height="3.5" transform="rotate(45 7 7)" fill="#777"/><rect x="5.5" y="0" width="3" height="3.5" transform="rotate(90 7 7)" fill="#777"/><rect x="5.5" y="0" width="3" height="3.5" transform="rotate(135 7 7)" fill="#777"/><rect x="5.5" y="0" width="3" height="3.5" transform="rotate(180 7 7)" fill="#777"/><rect x="5.5" y="0" width="3" height="3.5" transform="rotate(225 7 7)" fill="#777"/><rect x="5.5" y="0" width="3" height="3.5" transform="rotate(270 7 7)" fill="#777"/><rect x="5.5" y="0" width="3" height="3.5" transform="rotate(315 7 7)" fill="#777"/><circle cx="7" cy="7" r="4.8" fill="#777"/><circle cx="7" cy="7" r="2" fill="#f0f0f0"/></svg>
<div id="t23" class="t" style="left:86.65px;top:203px;font-size:11px;color:#333;font-weight:normal;transform:scaleX(0.9692);transform-origin:0 0;">Document Settings</div>
<div class="a" style="left:58px;top:222px;width:110px;height:20px;background:#f0f0f0;"></div>
<svg class="a" style="left:40px;top:225px" width="11" height="14" viewBox="0 0 11 14"><path d="M1 0.9L9.6 7L1 13.1Z" fill="#e6e6ea" stroke="#2a2a2a" stroke-width="1.3" stroke-linejoin="round"/></svg>
<svg class="a" style="left:61px;top:225px" width="16" height="13" viewBox="0 0 16 13"><path d="M0 0.3H7.3L8.3 1.3L7.3 2.3H0Z" fill="#9a9a9a"/><path d="M0 3.3H7.5L9 1.8H16V13H0Z" fill="#9a9a9a"/></svg>
<div id="t24" class="t" style="left:90.42px;top:227px;font-size:11px;color:#333;font-weight:normal;transform:scaleX(1.0109);transform-origin:0 0;">Named Views</div>
<div class="a" style="left:58px;top:246px;width:95px;height:20px;background:#f0f0f0;"></div>
<svg class="a" style="left:40px;top:249px" width="11" height="14" viewBox="0 0 11 14"><path d="M1 0.9L9.6 7L1 13.1Z" fill="#e6e6ea" stroke="#2a2a2a" stroke-width="1.3" stroke-linejoin="round"/></svg>
<svg class="a" style="left:61px;top:249px" width="16" height="14" viewBox="0 0 16 14"><path d="M0.7 7C4 2 12 2 15.3 7C12 12 4 12 0.7 7Z" fill="none" stroke="#9a9a9a" stroke-width="1"/><circle cx="8" cy="7" r="2.7" fill="none" stroke="#9a9a9a" stroke-width="1"/><path d="M2.5 0.8L14 12.5" stroke="#707070" stroke-width="0.9"/></svg>
<svg class="a" style="left:86px;top:249px" width="16" height="13" viewBox="0 0 16 13"><path d="M0 0.3H7.3L8.3 1.3L7.3 2.3H0Z" fill="#9a9a9a"/><path d="M0 3.3H7.5L9 1.8H16V13H0Z" fill="#9a9a9a"/></svg>
<div id="t25" class="t" style="left:116.12px;top:251px;font-size:11px;color:#333;font-weight:normal;transform:scaleX(0.9564);transform-origin:0 0;">Origin</div>
<div class="a" style="left:58px;top:270px;width:103px;height:20px;background:#f0f0f0;"></div>
<svg class="a" style="left:38px;top:273px" width="13" height="13" viewBox="0 0 13 13"><defs><linearGradient id="tg38273" x1="0.2" y1="0.3" x2="1" y2="1"><stop offset="0" stop-color="#eeeeee"/><stop offset="0.55" stop-color="#b8b8b8"/><stop offset="1" stop-color="#5a5a5a"/></linearGradient></defs><path d="M1 12.3L11.7 1V12.3Z" fill="url(#tg38273)" stroke="#1a1a1a" stroke-width="1.1" stroke-linejoin="round"/><path d="M11.7 1.3V12.3H1.3" fill="none" stroke="#000" stroke-width="1.6"/></svg>
<svg class="a" style="left:61px;top:273px" width="16" height="14" viewBox="0 0 16 14"><path d="M0.3 7C4 1.3 12 1.3 15.7 7C12 12.7 4 12.7 0.3 7Z" fill="#9a9a9a"/><circle cx="8" cy="7" r="2.55" fill="#9a9a9a" stroke="#f4f4f4" stroke-width="1.1"/></svg>
<svg class="a" style="left:86px;top:273px" width="16" height="13" viewBox="0 0 16 13"><path d="M0 0.3H7.3L8.3 1.3L7.3 2.3H0Z" fill="#9a9a9a"/><path d="M0 3.3H7.5L9 1.8H16V13H0Z" fill="#9a9a9a"/></svg>
<div id="t26" class="t" style="left:115.73px;top:275px;font-size:11px;color:#333;font-weight:normal;transform:scaleX(0.9915);transform-origin:0 0;">Bodies</div>
<div class="a" style="left:76px;top:294px;width:99px;height:20px;background:#f0f0f0;"></div>
<svg class="a" style="left:79px;top:297px" width="16" height="14" viewBox="0 0 16 14"><path d="M0.7 7C4 2 12 2 15.3 7C12 12 4 12 0.7 7Z" fill="none" stroke="#9a9a9a" stroke-width="1"/><circle cx="8" cy="7" r="2.7" fill="none" stroke="#9a9a9a" stroke-width="1"/><path d="M2.5 0.8L14 12.5" stroke="#707070" stroke-width="0.9"/></svg>
<svg class="a" style="left:104px;top:296px" width="17" height="16" viewBox="0 0 17 16"><defs><linearGradient id="bg296" x1="0" y1="0" x2="1" y2="0"><stop offset="0" stop-color="#b9bdc4"/><stop offset="0.6" stop-color="#f4f5f7"/><stop offset="1" stop-color="#ffffff"/></linearGradient></defs><rect x="0.7" y="0.7" width="15.3" height="14.8" rx="3.6" fill="url(#bg296)" stroke="#3c434d" stroke-width="1.2"/><path d="M1.3 4.6C1.3 1.5 3 1.3 8.3 1.3C13.6 1.3 15.4 1.5 15.4 4.6V6.2C12 5.3 5 5.3 1.3 6.2Z" fill="#ffffff"/></svg>
<div id="t27" class="t" style="left:133.74px;top:299px;font-size:11px;color:#333;font-weight:normal;transform:scaleX(0.9774);transform-origin:0 0;">Body1</div>
<div class="a" style="left:76px;top:318px;width:107px;height:20px;background:#f0f0f0;"></div>
<svg class="a" style="left:79px;top:321px" width="16" height="14" viewBox="0 0 16 14"><path d="M0.3 7C4 1.3 12 1.3 15.7 7C12 12.7 4 12.7 0.3 7Z" fill="#9a9a9a"/><circle cx="8" cy="7" r="2.55" fill="#9a9a9a" stroke="#f4f4f4" stroke-width="1.1"/></svg>
<svg class="a" style="left:104px;top:320px" width="17" height="16" viewBox="0 0 17 16"><defs><linearGradient id="bg320" x1="0" y1="0" x2="1" y2="0"><stop offset="0" stop-color="#b9bdc4"/><stop offset="0.6" stop-color="#f4f5f7"/><stop offset="1" stop-color="#ffffff"/></linearGradient></defs><rect x="0.7" y="0.7" width="15.3" height="14.8" rx="3.6" fill="url(#bg320)" stroke="#3c434d" stroke-width="1.2"/><path d="M1.3 4.6C1.3 1.5 3 1.3 8.3 1.3C13.6 1.3 15.4 1.5 15.4 4.6V6.2C12 5.3 5 5.3 1.3 6.2Z" fill="#ffffff"/></svg>
<div id="t28" class="t" style="left:133.72px;top:323px;font-size:11px;color:#333;font-weight:normal;transform:scaleX(1.0000);transform-origin:0 0;">Body35</div>
<div class="a" style="left:76px;top:342px;width:107px;height:20px;background:#f0f0f0;"></div>
<svg class="a" style="left:79px;top:345px" width="16" height="14" viewBox="0 0 16 14"><path d="M0.7 7C4 2 12 2 15.3 7C12 12 4 12 0.7 7Z" fill="none" stroke="#9a9a9a" stroke-width="1"/><circle cx="8" cy="7" r="2.7" fill="none" stroke="#9a9a9a" stroke-width="1"/><path d="M2.5 0.8L14 12.5" stroke="#707070" stroke-width="0.9"/></svg>
<svg class="a" style="left:104px;top:344px" width="17" height="16" viewBox="0 0 17 16"><defs><linearGradient id="bg344" x1="0" y1="0" x2="1" y2="0"><stop offset="0" stop-color="#b9bdc4"/><stop offset="0.6" stop-color="#f4f5f7"/><stop offset="1" stop-color="#ffffff"/></linearGradient></defs><rect x="0.7" y="0.7" width="15.3" height="14.8" rx="3.6" fill="url(#bg344)" stroke="#3c434d" stroke-width="1.2"/><path d="M1.3 4.6C1.3 1.5 3 1.3 8.3 1.3C13.6 1.3 15.4 1.5 15.4 4.6V6.2C12 5.3 5 5.3 1.3 6.2Z" fill="#ffffff"/></svg>
<div id="t29" class="t" style="left:133.72px;top:347px;font-size:11px;color:#333;font-weight:normal;transform:scaleX(1.0000);transform-origin:0 0;">Body43</div>
<div class="a" style="left:76px;top:366px;width:107px;height:20px;background:#f0f0f0;"></div>
<svg class="a" style="left:79px;top:369px" width="16" height="14" viewBox="0 0 16 14"><path d="M0.7 7C4 2 12 2 15.3 7C12 12 4 12 0.7 7Z" fill="none" stroke="#9a9a9a" stroke-width="1"/><circle cx="8" cy="7" r="2.7" fill="none" stroke="#9a9a9a" stroke-width="1"/><path d="M2.5 0.8L14 12.5" stroke="#707070" stroke-width="0.9"/></svg>
<svg class="a" style="left:104px;top:368px" width="17" height="16" viewBox="0 0 17 16"><defs><linearGradient id="bg368" x1="0" y1="0" x2="1" y2="0"><stop offset="0" stop-color="#b9bdc4"/><stop offset="0.6" stop-color="#f4f5f7"/><stop offset="1" stop-color="#ffffff"/></linearGradient></defs><rect x="0.7" y="0.7" width="15.3" height="14.8" rx="3.6" fill="url(#bg368)" stroke="#3c434d" stroke-width="1.2"/><path d="M1.3 4.6C1.3 1.5 3 1.3 8.3 1.3C13.6 1.3 15.4 1.5 15.4 4.6V6.2C12 5.3 5 5.3 1.3 6.2Z" fill="#ffffff"/></svg>
<div id="t30" class="t" style="left:133.73px;top:371px;font-size:11px;color:#333;font-weight:normal;transform:scaleX(0.9965);transform-origin:0 0;">Body44</div>
<div class="a" style="left:76px;top:390px;width:107px;height:20px;background:#f0f0f0;"></div>
<svg class="a" style="left:79px;top:393px" width="16" height="14" viewBox="0 0 16 14"><path d="M0.7 7C4 2 12 2 15.3 7C12 12 4 12 0.7 7Z" fill="none" stroke="#9a9a9a" stroke-width="1"/><circle cx="8" cy="7" r="2.7" fill="none" stroke="#9a9a9a" stroke-width="1"/><path d="M2.5 0.8L14 12.5" stroke="#707070" stroke-width="0.9"/></svg>
<svg class="a" style="left:104px;top:392px" width="17" height="16" viewBox="0 0 17 16"><defs><linearGradient id="bg392" x1="0" y1="0" x2="1" y2="0"><stop offset="0" stop-color="#b9bdc4"/><stop offset="0.6" stop-color="#f4f5f7"/><stop offset="1" stop-color="#ffffff"/></linearGradient></defs><rect x="0.7" y="0.7" width="15.3" height="14.8" rx="3.6" fill="url(#bg392)" stroke="#3c434d" stroke-width="1.2"/><path d="M1.3 4.6C1.3 1.5 3 1.3 8.3 1.3C13.6 1.3 15.4 1.5 15.4 4.6V6.2C12 5.3 5 5.3 1.3 6.2Z" fill="#ffffff"/></svg>
<div id="t31" class="t" style="left:133.72px;top:395px;font-size:11px;color:#333;font-weight:normal;transform:scaleX(1.0000);transform-origin:0 0;">Body45</div>
<div class="a" style="left:76px;top:414px;width:107px;height:20px;background:#f0f0f0;"></div>
<svg class="a" style="left:79px;top:417px" width="16" height="14" viewBox="0 0 16 14"><path d="M0.7 7C4 2 12 2 15.3 7C12 12 4 12 0.7 7Z" fill="none" stroke="#9a9a9a" stroke-width="1"/><circle cx="8" cy="7" r="2.7" fill="none" stroke="#9a9a9a" stroke-width="1"/><path d="M2.5 0.8L14 12.5" stroke="#707070" stroke-width="0.9"/></svg>
<svg class="a" style="left:104px;top:416px" width="17" height="16" viewBox="0 0 17 16"><defs><linearGradient id="bg416" x1="0" y1="0" x2="1" y2="0"><stop offset="0" stop-color="#b9bdc4"/><stop offset="0.6" stop-color="#f4f5f7"/><stop offset="1" stop-color="#ffffff"/></linearGradient></defs><rect x="0.7" y="0.7" width="15.3" height="14.8" rx="3.6" fill="url(#bg416)" stroke="#3c434d" stroke-width="1.2"/><path d="M1.3 4.6C1.3 1.5 3 1.3 8.3 1.3C13.6 1.3 15.4 1.5 15.4 4.6V6.2C12 5.3 5 5.3 1.3 6.2Z" fill="#ffffff"/></svg>
<div id="t32" class="t" style="left:133.72px;top:419px;font-size:11px;color:#333;font-weight:normal;transform:scaleX(1.0000);transform-origin:0 0;">Body46</div>
<div class="a" style="left:76px;top:438px;width:107px;height:20px;background:#f0f0f0;"></div>
<svg class="a" style="left:79px;top:441px" width="16" height="14" viewBox="0 0 16 14"><path d="M0.3 7C4 1.3 12 1.3 15.7 7C12 12.7 4 12.7 0.3 7Z" fill="#9a9a9a"/><circle cx="8" cy="7" r="2.55" fill="#9a9a9a" stroke="#f4f4f4" stroke-width="1.1"/></svg>
<svg class="a" style="left:104px;top:440px" width="17" height="16" viewBox="0 0 17 16"><defs><linearGradient id="bg440" x1="0" y1="0" x2="1" y2="0"><stop offset="0" stop-color="#b9bdc4"/><stop offset="0.6" stop-color="#f4f5f7"/><stop offset="1" stop-color="#ffffff"/></linearGradient></defs><rect x="0.7" y="0.7" width="15.3" height="14.8" rx="3.6" fill="url(#bg440)" stroke="#3c434d" stroke-width="1.2"/><path d="M1.3 4.6C1.3 1.5 3 1.3 8.3 1.3C13.6 1.3 15.4 1.5 15.4 4.6V6.2C12 5.3 5 5.3 1.3 6.2Z" fill="#ffffff"/></svg>
<div id="t33" class="t" style="left:133.72px;top:443px;font-size:11px;color:#333;font-weight:normal;transform:scaleX(1.0000);transform-origin:0 0;">Body47</div>
<div class="a" style="left:58px;top:462px;width:115px;height:20px;background:#f0f0f0;"></div>
<svg class="a" style="left:40px;top:465px" width="11" height="14" viewBox="0 0 11 14"><path d="M1 0.9L9.6 7L1 13.1Z" fill="#e6e6ea" stroke="#2a2a2a" stroke-width="1.3" stroke-linejoin="round"/></svg>
<svg class="a" style="left:61px;top:465px" width="16" height="14" viewBox="0 0 16 14"><path d="M0.3 7C4 1.3 12 1.3 15.7 7C12 12.7 4 12.7 0.3 7Z" fill="#9a9a9a"/><circle cx="8" cy="7" r="2.55" fill="#9a9a9a" stroke="#f4f4f4" stroke-width="1.1"/></svg>
<svg class="a" style="left:86px;top:465px" width="16" height="13" viewBox="0 0 16 13"><path d="M0 0.3H7.3L8.3 1.3L7.3 2.3H0Z" fill="#9a9a9a"/><path d="M0 3.3H7.5L9 1.8H16V13H0Z" fill="#9a9a9a"/></svg>
<div id="t34" class="t" style="left:115.90px;top:467px;font-size:11px;color:#333;font-weight:normal;transform:scaleX(0.9994);transform-origin:0 0;">Sketches</div>
<div class="a" style="left:58px;top:486px;width:176px;height:20px;background:#f0f0f0;"></div>
<svg class="a" style="left:40px;top:489px" width="11" height="14" viewBox="0 0 11 14"><path d="M1 0.9L9.6 7L1 13.1Z" fill="#e6e6ea" stroke="#2a2a2a" stroke-width="1.3" stroke-linejoin="round"/></svg>
<svg class="a" style="left:61px;top:489px" width="16" height="14" viewBox="0 0 16 14"><path d="M0.7 7C4 2 12 2 15.3 7C12 12 4 12 0.7 7Z" fill="none" stroke="#9a9a9a" stroke-width="1"/><circle cx="8" cy="7" r="2.7" fill="none" stroke="#9a9a9a" stroke-width="1"/><path d="M2.5 0.8L14 12.5" stroke="#707070" stroke-width="0.9"/></svg>
<svg class="a" style="left:86px;top:487px" width="17" height="17" viewBox="0 0 17 17"><path d="M0.5 3.5L2.5 1.5H7.5V8.5H14V15.5H0.5Z" fill="#d8d8d8"/><path d="M0.5 3.5L2.5 1.5H7.5V8.5H14V15.5H0.5Z M7.2 8.5V15.5 M0.5 8.5H7.2" fill="none" stroke="#555" stroke-width="1"/><path d="M7.5 8.5L9 7" stroke="#555" stroke-width="1"/><circle cx="12.5" cy="1.5" r="1" fill="none" stroke="#333" stroke-width="0.9"/><path d="M12.5 2.5V8.5M10.8 4.3H14.2M9.6 6.3C10 8.5 15 8.5 15.4 6.3" fill="none" stroke="#333" stroke-width="1"/></svg>
<svg class="a" style="left:108.5px;top:485.5px" width="21" height="21" viewBox="0 0 24 24"><g transform="rotate(-45 12 12)"><path d="M3.9 12c0-1.71 1.39-3.1 3.1-3.1h4V6.6H7c-2.9 0-5.3 2.4-5.3 5.4s2.4 5.4 5.3 5.4h4v-2.3H7c-1.71 0-3.1-1.39-3.1-3.1zM8.5 13.2h7v-2.4h-7zM17 6.6h-4v2.3h4c1.71 0 3.1 1.39 3.1 3.1s-1.39 3.1-3.1 3.1h-4v2.3h4c2.9 0 5.3-2.4 5.3-5.4s-2.4-5.4-5.3-5.4z" fill="#2e2e2e"/></g></svg>
<div id="t35" class="t" style="left:141.28px;top:491px;font-size:11px;color:#333;font-weight:normal;transform:scaleX(0.9782);transform-origin:0 0;">temperature v1:1</div>
<div class="a" style="left:58px;top:510px;width:144px;height:20px;background:#f0f0f0;"></div>
<svg class="a" style="left:40px;top:513px" width="11" height="14" viewBox="0 0 11 14"><path d="M1 0.9L9.6 7L1 13.1Z" fill="#e6e6ea" stroke="#2a2a2a" stroke-width="1.3" stroke-linejoin="round"/></svg>
<svg class="a" style="left:61px;top:513px" width="16" height="14" viewBox="0 0 16 14"><path d="M0.3 7C4 1.3 12 1.3 15.7 7C12 12.7 4 12.7 0.3 7Z" fill="#9a9a9a"/><circle cx="8" cy="7" r="2.55" fill="#9a9a9a" stroke="#f4f4f4" stroke-width="1.1"/></svg>
<svg class="a" style="left:86px;top:512px" width="17" height="17" viewBox="0 0 17 17"><path d="M1 3.6L3.4 1H9.3V6.8H15.2V12.6L12.6 15.4H1Z" fill="#fff"/><rect x="2.2" y="3.8" width="4" height="5.2" fill="#dfe2e6"/><rect x="2.2" y="10.4" width="4" height="3.8" fill="#dfe2e6"/><rect x="7.6" y="10.4" width="4.4" height="3.8" fill="#dfe2e6"/><path d="M7.8 2V7.5M13.8 8V13" stroke="#dfe2e6" stroke-width="1"/><path d="M1 3.6L3.4 1H9.3V6.8H15.2V12.6L12.6 15.4H1Z" fill="none" stroke="#444" stroke-width="1.2" stroke-linejoin="round"/><path d="M9.3 6.8L6.6 9.5V15.4" fill="none" stroke="#444" stroke-width="1.2"/><path d="M1 9.9H6.6" stroke="#e8eaee" stroke-width="1"/></svg>
<svg class="a" style="left:108.5px;top:509.5px" width="21" height="21" viewBox="0 0 24 24"><g transform="rotate(-45 12 12)"><path d="M3.9 12c0-1.71 1.39-3.1 3.1-3.1h4V6.6H7c-2.9 0-5.3 2.4-5.3 5.4s2.4 5.4 5.3 5.4h4v-2.3H7c-1.71 0-3.1-1.39-3.1-3.1zM8.5 13.2h7v-2.4h-7zM17 6.6h-4v2.3h4c1.71 0 3.1 1.39 3.1 3.1s-1.39 3.1-3.1 3.1h-4v2.3h4c2.9 0 5.3-2.4 5.3-5.4s-2.4-5.4-5.3-5.4z" fill="#2e2e2e"/></g></svg>
<div id="t36" class="t" style="left:140.90px;top:515px;font-size:11px;color:#333;font-weight:normal;transform:scaleX(1.0067);transform-origin:0 0;">case_ v1:1</div>
<div class="a" style="left:58px;top:534px;width:228px;height:20px;background:#f0f0f0;"></div>
<svg class="a" style="left:40px;top:537px" width="11" height="14" viewBox="0 0 11 14"><path d="M1 0.9L9.6 7L1 13.1Z" fill="#e6e6ea" stroke="#2a2a2a" stroke-width="1.3" stroke-linejoin="round"/></svg>
<svg class="a" style="left:61px;top:537px" width="16" height="14" viewBox="0 0 16 14"><path d="M0.3 7C4 1.3 12 1.3 15.7 7C12 12.7 4 12.7 0.3 7Z" fill="#9a9a9a"/><circle cx="8" cy="7" r="2.55" fill="#9a9a9a" stroke="#f4f4f4" stroke-width="1.1"/></svg>
<svg class="a" style="left:86px;top:535px" width="17" height="17" viewBox="0 0 17 17"><path d="M0.5 5L5 0.5H16V11.5L11.5 16H0.5Z" fill="#e2e5ea"/><path d="M0.5 5L5 0.5H16L11.5 5Z" fill="#fafafa"/><path d="M11.5 5L16 0.5V11.5L11.5 16Z" fill="#cdd1d7"/><path d="M0.5 5L5 0.5H16V11.5L11.5 16H0.5Z M0.5 5H11.5V16" fill="none" stroke="#333" stroke-width="1.1" stroke-linejoin="round"/></svg>
<svg class="a" style="left:108.5px;top:533.5px" width="21" height="21" viewBox="0 0 24 24"><g transform="rotate(-45 12 12)"><path d="M3.9 12c0-1.71 1.39-3.1 3.1-3.1h4V6.6H7c-2.9 0-5.3 2.4-5.3 5.4s2.4 5.4 5.3 5.4h4v-2.3H7c-1.71 0-3.1-1.39-3.1-3.1zM8.5 13.2h7v-2.4h-7zM17 6.6h-4v2.3h4c1.71 0 3.1 1.39 3.1 3.1s-1.39 3.1-3.1 3.1h-4v2.3h4c2.9 0 5.3-2.4 5.3-5.4s-2.4-5.4-5.3-5.4z" fill="#2e2e2e"/></g></svg>
<div id="t37" class="t" style="left:140.56px;top:539px;font-size:11px;color:#333;font-weight:normal;transform:scaleX(0.9580);transform-origin:0 0;">12mm Push Button Cap v1:1</div>
<div class="a" style="left:4px;top:689px;width:300px;height:25px;background:#f0f0f0;border:1px solid #c9c9c9"></div>
<div id="t21" class="t" style="left:28.55px;top:696px;font-size:11px;color:#555;font-weight:normal;transform:scaleX(0.9012);transform-origin:0 0;">COMMENTS</div>
<svg class="a" style="left:282px;top:696px" width="10" height="10" viewBox="0 0 10 10"><circle cx="5" cy="5" r="5" fill="#2a2a2a"/><path d="M5 2.3V7.7M2.3 5H7.7" stroke="#fff" stroke-width="1.4"/></svg>
<div class="a" style="left:0px;top:718px;width:1366px;height:1px;background:#d6d6d6;"></div>
<div class="a" style="left:0px;top:719px;width:1366px;height:47px;background:#f2f2f2;"></div>
<div class="a" style="left:0px;top:766px;width:1366px;height:2px;background:#243e51;"></div>
<svg class="a" style="left:0px;top:736px" width="130" height="20" viewBox="0 0 130 20"><g fill="#5f5f5f"><rect x="10.9" y="5" width="2.1" height="11.8"/><path d="M13.3 11L22.1 5.2V16.8Z"/><path d="M35.4 11L44.7 5V16.8Z"/><rect x="46.1" y="8.7" width="1.9" height="5.3"/><path d="M60.9 3L73 10.4L60.9 17.8Z"/><rect x="85" y="8.7" width="1.9" height="5.3"/><path d="M88 5L97.5 11L88 16.8Z"/><path d="M111.1 5.2L119.7 11L111.1 16.8Z"/><rect x="120" y="5" width="2.1" height="11.8"/></g></svg>
<div class="a" style="left:137px;top:758px;width:4px;height:2px;background:#cfcfcf;"></div>
<div class="a" style="left:142px;top:758px;width:4px;height:2px;background:#cfcfcf;"></div>
<div class="a" style="left:148px;top:758px;width:1148px;height:2px;background:#cdcdcd;"></div>
<div class="a" style="left:1296px;top:758px;width:16px;height:2px;background:#d0d0d0;"></div>
<div class="a" style="left:1314px;top:758px;width:4px;height:2px;background:#d8d8d8;"></div>
<div class="a" style="left:1319.7px;top:758px;width:1.2px;height:2px;background:#d8d8d8;"></div>
<div class="a" style="left:153px;top:753px;width:2px;height:5px;background:#cdcdcd;"></div>
<svg class="a" style="left:146px;top:734px" width="17" height="17" viewBox="0 0 17 17"><path d="M0.3 4.2L3.5 0.2H13L10 4.2Z" fill="#8ccaf5"/><path d="M0.3 4.2H10V13.6H0.3Z" fill="#68ade3"/><path d="M10 4.2L13 0.2V10.6L10 13.6Z" fill="#4a8fc6"/><path d="M0.3 13.6H10V16.2H0.3Z" fill="#b5b5b5"/><path d="M10 13.6L13 10.6V13.2L10 16.2Z" fill="#a0a0a0"/><path d="M14.4 13.2V2" stroke="#444" stroke-width="1"/><path d="M13.3 2.8L14.4 0.5L15.5 2.8Z" fill="#333"/></svg>
<div class="a" style="left:177px;top:753px;width:2px;height:5px;background:#cdcdcd;"></div>
<svg class="a" style="left:170px;top:734px" width="17" height="17" viewBox="0 0 17 17"><path d="M1.5 1H13.5M1.5 14H9M0.8 1.5V13.5M14 1.5V8.5" stroke="#c4c4c4" stroke-width="1.3"/><g fill="#1e8fe6"><rect x="0" y="0.2" width="1.7" height="1.7"/><rect x="13.2" y="0.2" width="1.7" height="1.7"/><rect x="0" y="13.2" width="1.7" height="1.7"/><rect x="3.5" y="3.6" width="1.5" height="1.5"/><rect x="9.7" y="3.6" width="1.5" height="1.5"/><rect x="3.5" y="9.8" width="1.5" height="1.5"/></g><path d="M5.2 4.35H9.6M4.25 5.3V9.7" stroke="#8a8a8a" stroke-width="0.7" stroke-dasharray="1 0.7"/><path d="M5.4 10.8C8 10.4 10.4 8.2 10.9 5.3" fill="none" stroke="#555" stroke-width="0.9"/><path d="M9.6 14.6L13.6 10.6" stroke="#f2b230" stroke-width="2.5"/><path d="M13.4 10.8L14.9 9.3" stroke="#e83a3a" stroke-width="2.5" stroke-linecap="round"/><path d="M8.4 15.8L9 14L10.3 15.2Z" fill="#555"/></svg>
<div class="a" style="left:201px;top:753px;width:2px;height:5px;background:#cdcdcd;"></div>
<svg class="a" style="left:194px;top:734px" width="17" height="17" viewBox="0 0 17 17"><path d="M0.3 4.2L3.5 0.2H13L10 4.2Z" fill="#8ccaf5"/><path d="M0.3 4.2H10V13.6H0.3Z" fill="#68ade3"/><path d="M10 4.2L13 0.2V10.6L10 13.6Z" fill="#4a8fc6"/><path d="M0.3 13.6H10V16.2H0.3Z" fill="#b5b5b5"/><path d="M10 13.6L13 10.6V13.2L10 16.2Z" fill="#a0a0a0"/><path d="M14.4 13.2V2" stroke="#444" stroke-width="1"/><path d="M13.3 2.8L14.4 0.5L15.5 2.8Z" fill="#333"/></svg>
<div class="a" style="left:225px;top:753px;width:2px;height:5px;background:#cdcdcd;"></div>
<svg class="a" style="left:218px;top:734px" width="17" height="17" viewBox="0 0 17 17"><path d="M1.5 1H13.5M1.5 14H9M0.8 1.5V13.5M14 1.5V8.5" stroke="#c4c4c4" stroke-width="1.3"/><g fill="#1e8fe6"><rect x="0" y="0.2" width="1.7" height="1.7"/><rect x="13.2" y="0.2" width="1.7" height="1.7"/><rect x="0" y="13.2" width="1.7" height="1.7"/><rect x="3.5" y="3.6" width="1.5" height="1.5"/><rect x="9.7" y="3.6" width="1.5" height="1.5"/><rect x="3.5" y="9.8" width="1.5" height="1.5"/></g><path d="M5.2 4.35H9.6M4.25 5.3V9.7" stroke="#8a8a8a" stroke-width="0.7" stroke-dasharray="1 0.7"/><path d="M5.4 10.8C8 10.4 10.4 8.2 10.9 5.3" fill="none" stroke="#555" stroke-width="0.9"/><path d="M9.6 14.6L13.6 10.6" stroke="#f2b230" stroke-width="2.5"/><path d="M13.4 10.8L14.9 9.3" stroke="#e83a3a" stroke-width="2.5" stroke-linecap="round"/><path d="M8.4 15.8L9 14L10.3 15.2Z" fill="#555"/></svg>
<div class="a" style="left:249px;top:753px;width:2px;height:5px;background:#cdcdcd;"></div>
<svg class="a" style="left:242px;top:734px" width="17" height="17" viewBox="0 0 17 17"><path d="M1 3.5L3.8 0.4H14.8L12 3.5Z" fill="#8ccaf5"/><path d="M1 3.5H12V8H1Z" fill="#4a8fc6" opacity="0.6"/><path d="M1 3.5H12V7.7H1Z" fill="#68ade3"/><path d="M12 3.5L14.8 0.4V5L12 7.7Z" fill="#4a8fc6"/><path d="M1.2 9.7H12L15 6.3" fill="none" stroke="#f4f4f4" stroke-width="2.4"/><path d="M0 9.5H12.2L16 5.5" fill="none" stroke="#5ab0f0" stroke-width="1.1"/><path d="M1.2 10.6H12V15.7H1.2Z" fill="#d8d8d8"/><path d="M12 10.6L14.8 8V13L12 15.7Z" fill="#c0c0c0"/><path d="M1.2 10.6V15.7H12L14.8 13V8" fill="none" stroke="#999" stroke-width="0.9"/></svg>
<div class="a" style="left:273px;top:753px;width:2px;height:5px;background:#cdcdcd;"></div>
<svg class="a" style="left:266px;top:734px" width="17" height="17" viewBox="0 0 17 17"><path d="M7.6 3.2V12.8M3.2 7.6H12.8" stroke="#666" stroke-width="1.3"/><path d="M7.6 0.2L10 3.5H5.2Z M7.6 15.3L10 12H5.2Z M0.2 7.6L3.5 5.2V10Z M15.2 7.6L11.9 5.2V10Z" fill="#2a2a2a"/></svg>
<div class="a" style="left:297px;top:753px;width:2px;height:5px;background:#cdcdcd;"></div>
<svg class="a" style="left:290px;top:734px" width="17" height="17" viewBox="0 0 17 17"><path d="M7.6 3.2V12.8M3.2 7.6H12.8" stroke="#666" stroke-width="1.3"/><path d="M7.6 0.2L10 3.5H5.2Z M7.6 15.3L10 12H5.2Z M0.2 7.6L3.5 5.2V10Z M15.2 7.6L11.9 5.2V10Z" fill="#2a2a2a"/></svg>
<div class="a" style="left:321px;top:753px;width:2px;height:5px;background:#cdcdcd;"></div>
<svg class="a" style="left:314px;top:734px" width="17" height="17" viewBox="0 0 17 17"><path d="M1.5 1H13.5M1.5 14H9M0.8 1.5V13.5M14 1.5V8.5" stroke="#c4c4c4" stroke-width="1.3"/><g fill="#1e8fe6"><rect x="0" y="0.2" width="1.7" height="1.7"/><rect x="13.2" y="0.2" width="1.7" height="1.7"/><rect x="0" y="13.2" width="1.7" height="1.7"/><rect x="3.5" y="3.6" width="1.5" height="1.5"/><rect x="9.7" y="3.6" width="1.5" height="1.5"/><rect x="3.5" y="9.8" width="1.5" height="1.5"/></g><path d="M5.2 4.35H9.6M4.25 5.3V9.7" stroke="#8a8a8a" stroke-width="0.7" stroke-dasharray="1 0.7"/><path d="M5.4 10.8C8 10.4 10.4 8.2 10.9 5.3" fill="none" stroke="#555" stroke-width="0.9"/><path d="M9.6 14.6L13.6 10.6" stroke="#f2b230" stroke-width="2.5"/><path d="M13.4 10.8L14.9 9.3" stroke="#e83a3a" stroke-width="2.5" stroke-linecap="round"/><path d="M8.4 15.8L9 14L10.3 15.2Z" fill="#555"/></svg>
<div class="a" style="left:345px;top:753px;width:2px;height:5px;background:#cdcdcd;"></div>
<svg class="a" style="left:338px;top:734px" width="17" height="17" viewBox="0 0 17 17"><path d="M0.3 4.2L3.5 0.2H13L10 4.2Z" fill="#8ccaf5"/><path d="M0.3 4.2H10V13.6H0.3Z" fill="#68ade3"/><path d="M10 4.2L13 0.2V10.6L10 13.6Z" fill="#4a8fc6"/><path d="M0.3 13.6H10V16.2H0.3Z" fill="#b5b5b5"/><path d="M10 13.6L13 10.6V13.2L10 16.2Z" fill="#a0a0a0"/><path d="M14.4 13.2V2" stroke="#444" stroke-width="1"/><path d="M13.3 2.8L14.4 0.5L15.5 2.8Z" fill="#333"/></svg>
<div class="a" style="left:369px;top:753px;width:2px;height:5px;background:#cdcdcd;"></div>
<svg class="a" style="left:362px;top:734px" width="17" height="17" viewBox="0 0 17 17"><path d="M1.5 1H13.5M1.5 14H9M0.8 1.5V13.5M14 1.5V8.5" stroke="#c4c4c4" stroke-width="1.3"/><g fill="#1e8fe6"><rect x="0" y="0.2" width="1.7" height="1.7"/><rect x="13.2" y="0.2" width="1.7" height="1.7"/><rect x="0" y="13.2" width="1.7" height="1.7"/><rect x="3.5" y="3.6" width="1.5" height="1.5"/><rect x="9.7" y="3.6" width="1.5" height="1.5"/><rect x="3.5" y="9.8" width="1.5" height="1.5"/></g><path d="M5.2 4.35H9.6M4.25 5.3V9.7" stroke="#8a8a8a" stroke-width="0.7" stroke-dasharray="1 0.7"/><path d="M5.4 10.8C8 10.4 10.4 8.2 10.9 5.3" fill="none" stroke="#555" stroke-width="0.9"/><path d="M9.6 14.6L13.6 10.6" stroke="#f2b230" stroke-width="2.5"/><path d="M13.4 10.8L14.9 9.3" stroke="#e83a3a" stroke-width="2.5" stroke-linecap="round"/><path d="M8.4 15.8L9 14L10.3 15.2Z" fill="#555"/></svg>
<div class="a" style="left:393px;top:753px;width:2px;height:5px;background:#cdcdcd;"></div>
<svg class="a" style="left:386px;top:734px" width="17" height="17" viewBox="0 0 17 17"><path d="M0.3 4.2L3.5 0.2H13L10 4.2Z" fill="#8ccaf5"/><path d="M0.3 4.2H10V13.6H0.3Z" fill="#68ade3"/><path d="M10 4.2L13 0.2V10.6L10 13.6Z" fill="#4a8fc6"/><path d="M0.3 13.6H10V16.2H0.3Z" fill="#b5b5b5"/><path d="M10 13.6L13 10.6V13.2L10 16.2Z" fill="#a0a0a0"/><path d="M14.4 13.2V2" stroke="#444" stroke-width="1"/><path d="M13.3 2.8L14.4 0.5L15.5 2.8Z" fill="#333"/></svg>
<div class="a" style="left:417px;top:753px;width:2px;height:5px;background:#cdcdcd;"></div>
<svg class="a" style="left:410px;top:734px" width="17" height="17" viewBox="0 0 17 17"><path d="M0.3 4.2L3.5 0.2H13L10 4.2Z" fill="#8ccaf5"/><path d="M0.3 4.2H10V13.6H0.3Z" fill="#68ade3"/><path d="M10 4.2L13 0.2V10.6L10 13.6Z" fill="#4a8fc6"/><path d="M0.3 13.6H10V16.2H0.3Z" fill="#b5b5b5"/><path d="M10 13.6L13 10.6V13.2L10 16.2Z" fill="#a0a0a0"/><path d="M14.4 13.2V2" stroke="#444" stroke-width="1"/><path d="M13.3 2.8L14.4 0.5L15.5 2.8Z" fill="#333"/></svg>
<div class="a" style="left:441px;top:753px;width:2px;height:5px;background:#cdcdcd;"></div>
<svg class="a" style="left:434px;top:734px" width="17" height="17" viewBox="0 0 17 17"><path d="M1.5 1H13.5M1.5 14H9M0.8 1.5V13.5M14 1.5V8.5" stroke="#c4c4c4" stroke-width="1.3"/><g fill="#1e8fe6"><rect x="0" y="0.2" width="1.7" height="1.7"/><rect x="13.2" y="0.2" width="1.7" height="1.7"/><rect x="0" y="13.2" width="1.7" height="1.7"/><rect x="3.5" y="3.6" width="1.5" height="1.5"/><rect x="9.7" y="3.6" width="1.5" height="1.5"/><rect x="3.5" y="9.8" width="1.5" height="1.5"/></g><path d="M5.2 4.35H9.6M4.25 5.3V9.7" stroke="#8a8a8a" stroke-width="0.7" stroke-dasharray="1 0.7"/><path d="M5.4 10.8C8 10.4 10.4 8.2 10.9 5.3" fill="none" stroke="#555" stroke-width="0.9"/><path d="M9.6 14.6L13.6 10.6" stroke="#f2b230" stroke-width="2.5"/><path d="M13.4 10.8L14.9 9.3" stroke="#e83a3a" stroke-width="2.5" stroke-linecap="round"/><path d="M8.4 15.8L9 14L10.3 15.2Z" fill="#555"/></svg>
<div class="a" style="left:465px;top:753px;width:2px;height:5px;background:#cdcdcd;"></div>
<svg class="a" style="left:458px;top:734px" width="17" height="17" viewBox="0 0 17 17"><path d="M0.3 4.2L3.5 0.2H13L10 4.2Z" fill="#8ccaf5"/><path d="M0.3 4.2H10V13.6H0.3Z" fill="#68ade3"/><path d="M10 4.2L13 0.2V10.6L10 13.6Z" fill="#4a8fc6"/><path d="M0.3 13.6H10V16.2H0.3Z" fill="#b5b5b5"/><path d="M10 13.6L13 10.6V13.2L10 16.2Z" fill="#a0a0a0"/><path d="M14.4 13.2V2" stroke="#444" stroke-width="1"/><path d="M13.3 2.8L14.4 0.5L15.5 2.8Z" fill="#333"/></svg>
<div class="a" style="left:489px;top:753px;width:2px;height:5px;background:#cdcdcd;"></div>
<svg class="a" style="left:482px;top:734px" width="17" height="17" viewBox="0 0 17 17"><path d="M0.3 4.2L3.5 0.2H13L10 4.2Z" fill="#8ccaf5"/><path d="M0.3 4.2H10V13.6H0.3Z" fill="#68ade3"/><path d="M10 4.2L13 0.2V10.6L10 13.6Z" fill="#4a8fc6"/><path d="M0.3 13.6H10V16.2H0.3Z" fill="#b5b5b5"/><path d="M10 13.6L13 10.6V13.2L10 16.2Z" fill="#a0a0a0"/><path d="M14.4 13.2V2" stroke="#444" stroke-width="1"/><path d="M13.3 2.8L14.4 0.5L15.5 2.8Z" fill="#333"/></svg>
<div class="a" style="left:513px;top:753px;width:2px;height:5px;background:#cdcdcd;"></div>
<svg class="a" style="left:506px;top:734px" width="17" height="17" viewBox="0 0 17 17"><path d="M1.5 1H13.5M1.5 14H9M0.8 1.5V13.5M14 1.5V8.5" stroke="#c4c4c4" stroke-width="1.3"/><g fill="#1e8fe6"><rect x="0" y="0.2" width="1.7" height="1.7"/><rect x="13.2" y="0.2" width="1.7" height="1.7"/><rect x="0" y="13.2" width="1.7" height="1.7"/><rect x="3.5" y="3.6" width="1.5" height="1.5"/><rect x="9.7" y="3.6" width="1.5" height="1.5"/><rect x="3.5" y="9.8" width="1.5" height="1.5"/></g><path d="M5.2 4.35H9.6M4.25 5.3V9.7" stroke="#8a8a8a" stroke-width="0.7" stroke-dasharray="1 0.7"/><path d="M5.4 10.8C8 10.4 10.4 8.2 10.9 5.3" fill="none" stroke="#555" stroke-width="0.9"/><path d="M9.6 14.6L13.6 10.6" stroke="#f2b230" stroke-width="2.5"/><path d="M13.4 10.8L14.9 9.3" stroke="#e83a3a" stroke-width="2.5" stroke-linecap="round"/><path d="M8.4 15.8L9 14L10.3 15.2Z" fill="#555"/></svg>
<div class="a" style="left:537px;top:753px;width:2px;height:5px;background:#cdcdcd;"></div>
<svg class="a" style="left:530px;top:734px" width="17" height="17" viewBox="0 0 17 17"><path d="M0.3 4.2L3.5 0.2H13L10 4.2Z" fill="#8ccaf5"/><path d="M0.3 4.2H10V13.6H0.3Z" fill="#68ade3"/><path d="M10 4.2L13 0.2V10.6L10 13.6Z" fill="#4a8fc6"/><path d="M0.3 13.6H10V16.2H0.3Z" fill="#b5b5b5"/><path d="M10 13.6L13 10.6V13.2L10 16.2Z" fill="#a0a0a0"/><path d="M14.4 13.2V2" stroke="#444" stroke-width="1"/><path d="M13.3 2.8L14.4 0.5L15.5 2.8Z" fill="#333"/></svg>
<div class="a" style="left:561px;top:753px;width:2px;height:5px;background:#cdcdcd;"></div>
<svg class="a" style="left:554px;top:734px" width="17" height="17" viewBox="0 0 17 17"><path d="M1.5 1H13.5M1.5 14H9M0.8 1.5V13.5M14 1.5V8.5" stroke="#c4c4c4" stroke-width="1.3"/><g fill="#1e8fe6"><rect x="0" y="0.2" width="1.7" height="1.7"/><rect x="13.2" y="0.2" width="1.7" height="1.7"/><rect x="0" y="13.2" width="1.7" height="1.7"/><rect x="3.5" y="3.6" width="1.5" height="1.5"/><rect x="9.7" y="3.6" width="1.5" height="1.5"/><rect x="3.5" y="9.8" width="1.5" height="1.5"/></g><path d="M5.2 4.35H9.6M4.25 5.3V9.7" stroke="#8a8a8a" stroke-width="0.7" stroke-dasharray="1 0.7"/><path d="M5.4 10.8C8 10.4 10.4 8.2 10.9 5.3" fill="none" stroke="#555" stroke-width="0.9"/><path d="M9.6 14.6L13.6 10.6" stroke="#f2b230" stroke-width="2.5"/><path d="M13.4 10.8L14.9 9.3" stroke="#e83a3a" stroke-width="2.5" stroke-linecap="round"/><path d="M8.4 15.8L9 14L10.3 15.2Z" fill="#555"/></svg>
<div class="a" style="left:585px;top:753px;width:2px;height:5px;background:#cdcdcd;"></div>
<svg class="a" style="left:578px;top:734px" width="17" height="17" viewBox="0 0 17 17"><path d="M0.3 4.2L3.5 0.2H13L10 4.2Z" fill="#8ccaf5"/><path d="M0.3 4.2H10V13.6H0.3Z" fill="#68ade3"/><path d="M10 4.2L13 0.2V10.6L10 13.6Z" fill="#4a8fc6"/><path d="M0.3 13.6H10V16.2H0.3Z" fill="#b5b5b5"/><path d="M10 13.6L13 10.6V13.2L10 16.2Z" fill="#a0a0a0"/><path d="M14.4 13.2V2" stroke="#444" stroke-width="1"/><path d="M13.3 2.8L14.4 0.5L15.5 2.8Z" fill="#333"/></svg>
<div class="a" style="left:609px;top:753px;width:2px;height:5px;background:#cdcdcd;"></div>
<svg class="a" style="left:602px;top:734px" width="17" height="17" viewBox="0 0 17 17"><path d="M1.5 1H13.5M1.5 14H9M0.8 1.5V13.5M14 1.5V8.5" stroke="#c4c4c4" stroke-width="1.3"/><g fill="#1e8fe6"><rect x="0" y="0.2" width="1.7" height="1.7"/><rect x="13.2" y="0.2" width="1.7" height="1.7"/><rect x="0" y="13.2" width="1.7" height="1.7"/><rect x="3.5" y="3.6" width="1.5" height="1.5"/><rect x="9.7" y="3.6" width="1.5" height="1.5"/><rect x="3.5" y="9.8" width="1.5" height="1.5"/></g><path d="M5.2 4.35H9.6M4.25 5.3V9.7" stroke="#8a8a8a" stroke-width="0.7" stroke-dasharray="1 0.7"/><path d="M5.4 10.8C8 10.4 10.4 8.2 10.9 5.3" fill="none" stroke="#555" stroke-width="0.9"/><path d="M9.6 14.6L13.6 10.6" stroke="#f2b230" stroke-width="2.5"/><path d="M13.4 10.8L14.9 9.3" stroke="#e83a3a" stroke-width="2.5" stroke-linecap="round"/><path d="M8.4 15.8L9 14L10.3 15.2Z" fill="#555"/></svg>
<div class="a" style="left:633px;top:753px;width:2px;height:5px;background:#cdcdcd;"></div>
<svg class="a" style="left:626px;top:734px" width="17" height="17" viewBox="0 0 17 17"><path d="M1.5 1H13.5M1.5 14H9M0.8 1.5V13.5M14 1.5V8.5" stroke="#c4c4c4" stroke-width="1.3"/><g fill="#1e8fe6"><rect x="0" y="0.2" width="1.7" height="1.7"/><rect x="13.2" y="0.2" width="1.7" height="1.7"/><rect x="0" y="13.2" width="1.7" height="1.7"/><rect x="3.5" y="3.6" width="1.5" height="1.5"/><rect x="9.7" y="3.6" width="1.5" height="1.5"/><rect x="3.5" y="9.8" width="1.5" height="1.5"/></g><path d="M5.2 4.35H9.6M4.25 5.3V9.7" stroke="#8a8a8a" stroke-width="0.7" stroke-dasharray="1 0.7"/><path d="M5.4 10.8C8 10.4 10.4 8.2 10.9 5.3" fill="none" stroke="#555" stroke-width="0.9"/><path d="M9.6 14.6L13.6 10.6" stroke="#f2b230" stroke-width="2.5"/><path d="M13.4 10.8L14.9 9.3" stroke="#e83a3a" stroke-width="2.5" stroke-linecap="round"/><path d="M8.4 15.8L9 14L10.3 15.2Z" fill="#555"/></svg>
<div class="a" style="left:657px;top:753px;width:2px;height:5px;background:#cdcdcd;"></div>
<svg class="a" style="left:650px;top:734px" width="17" height="17" viewBox="0 0 17 17"><path d="M0.3 4.2L3.5 0.2H13L10 4.2Z" fill="#8ccaf5"/><path d="M0.3 4.2H10V13.6H0.3Z" fill="#68ade3"/><path d="M10 4.2L13 0.2V10.6L10 13.6Z" fill="#4a8fc6"/><path d="M0.3 13.6H10V16.2H0.3Z" fill="#b5b5b5"/><path d="M10 13.6L13 10.6V13.2L10 16.2Z" fill="#a0a0a0"/><path d="M14.4 13.2V2" stroke="#444" stroke-width="1"/><path d="M13.3 2.8L14.4 0.5L15.5 2.8Z" fill="#333"/></svg>
<div class="a" style="left:681px;top:753px;width:2px;height:5px;background:#cdcdcd;"></div>
<svg class="a" style="left:674px;top:734px" width="17" height="17" viewBox="0 0 17 17"><path d="M0.3 4.2L3.5 0.2H13L10 4.2Z" fill="#8ccaf5"/><path d="M0.3 4.2H10V13.6H0.3Z" fill="#68ade3"/><path d="M10 4.2L13 0.2V10.6L10 13.6Z" fill="#4a8fc6"/><path d="M0.3 13.6H10V16.2H0.3Z" fill="#b5b5b5"/><path d="M10 13.6L13 10.6V13.2L10 16.2Z" fill="#a0a0a0"/><path d="M14.4 13.2V2" stroke="#444" stroke-width="1"/><path d="M13.3 2.8L14.4 0.5L15.5 2.8Z" fill="#333"/></svg>
<div class="a" style="left:705px;top:753px;width:2px;height:5px;background:#cdcdcd;"></div>
<svg class="a" style="left:698px;top:734px" width="17" height="17" viewBox="0 0 17 17"><path d="M1.5 1H13.5M1.5 14H9M0.8 1.5V13.5M14 1.5V8.5" stroke="#c4c4c4" stroke-width="1.3"/><g fill="#1e8fe6"><rect x="0" y="0.2" width="1.7" height="1.7"/><rect x="13.2" y="0.2" width="1.7" height="1.7"/><rect x="0" y="13.2" width="1.7" height="1.7"/><rect x="3.5" y="3.6" width="1.5" height="1.5"/><rect x="9.7" y="3.6" width="1.5" height="1.5"/><rect x="3.5" y="9.8" width="1.5" height="1.5"/></g><path d="M5.2 4.35H9.6M4.25 5.3V9.7" stroke="#8a8a8a" stroke-width="0.7" stroke-dasharray="1 0.7"/><path d="M5.4 10.8C8 10.4 10.4 8.2 10.9 5.3" fill="none" stroke="#555" stroke-width="0.9"/><path d="M9.6 14.6L13.6 10.6" stroke="#f2b230" stroke-width="2.5"/><path d="M13.4 10.8L14.9 9.3" stroke="#e83a3a" stroke-width="2.5" stroke-linecap="round"/><path d="M8.4 15.8L9 14L10.3 15.2Z" fill="#555"/></svg>
<div class="a" style="left:729px;top:753px;width:2px;height:5px;background:#cdcdcd;"></div>
<svg class="a" style="left:722px;top:734px" width="17" height="17" viewBox="0 0 17 17"><path d="M0.3 4.2L3.5 0.2H13L10 4.2Z" fill="#8ccaf5"/><path d="M0.3 4.2H10V13.6H0.3Z" fill="#68ade3"/><path d="M10 4.2L13 0.2V10.6L10 13.6Z" fill="#4a8fc6"/><path d="M0.3 13.6H10V16.2H0.3Z" fill="#b5b5b5"/><path d="M10 13.6L13 10.6V13.2L10 16.2Z" fill="#a0a0a0"/><path d="M14.4 13.2V2" stroke="#444" stroke-width="1"/><path d="M13.3 2.8L14.4 0.5L15.5 2.8Z" fill="#333"/></svg>
<div class="a" style="left:753px;top:753px;width:2px;height:5px;background:#cdcdcd;"></div>
<svg class="a" style="left:746px;top:734px" width="17" height="17" viewBox="0 0 17 17"><path d="M1.5 1H13.5M1.5 14H9M0.8 1.5V13.5M14 1.5V8.5" stroke="#c4c4c4" stroke-width="1.3"/><g fill="#1e8fe6"><rect x="0" y="0.2" width="1.7" height="1.7"/><rect x="13.2" y="0.2" width="1.7" height="1.7"/><rect x="0" y="13.2" width="1.7" height="1.7"/><rect x="3.5" y="3.6" width="1.5" height="1.5"/><rect x="9.7" y="3.6" width="1.5" height="1.5"/><rect x="3.5" y="9.8" width="1.5" height="1.5"/></g><path d="M5.2 4.35H9.6M4.25 5.3V9.7" stroke="#8a8a8a" stroke-width="0.7" stroke-dasharray="1 0.7"/><path d="M5.4 10.8C8 10.4 10.4 8.2 10.9 5.3" fill="none" stroke="#555" stroke-width="0.9"/><path d="M9.6 14.6L13.6 10.6" stroke="#f2b230" stroke-width="2.5"/><path d="M13.4 10.8L14.9 9.3" stroke="#e83a3a" stroke-width="2.5" stroke-linecap="round"/><path d="M8.4 15.8L9 14L10.3 15.2Z" fill="#555"/></svg>
<div class="a" style="left:777px;top:753px;width:2px;height:5px;background:#cdcdcd;"></div>
<svg class="a" style="left:770px;top:734px" width="17" height="17" viewBox="0 0 17 17"><path d="M0.3 4.2L3.5 0.2H13L10 4.2Z" fill="#8ccaf5"/><path d="M0.3 4.2H10V13.6H0.3Z" fill="#68ade3"/><path d="M10 4.2L13 0.2V10.6L10 13.6Z" fill="#4a8fc6"/><path d="M0.3 13.6H10V16.2H0.3Z" fill="#b5b5b5"/><path d="M10 13.6L13 10.6V13.2L10 16.2Z" fill="#a0a0a0"/><path d="M14.4 13.2V2" stroke="#444" stroke-width="1"/><path d="M13.3 2.8L14.4 0.5L15.5 2.8Z" fill="#333"/></svg>
<div class="a" style="left:801px;top:753px;width:2px;height:5px;background:#cdcdcd;"></div>
<svg class="a" style="left:794px;top:734px" width="17" height="17" viewBox="0 0 17 17"><path d="M1.5 1H13.5M1.5 14H9M0.8 1.5V13.5M14 1.5V8.5" stroke="#c4c4c4" stroke-width="1.3"/><g fill="#1e8fe6"><rect x="0" y="0.2" width="1.7" height="1.7"/><rect x="13.2" y="0.2" width="1.7" height="1.7"/><rect x="0" y="13.2" width="1.7" height="1.7"/><rect x="3.5" y="3.6" width="1.5" height="1.5"/><rect x="9.7" y="3.6" width="1.5" height="1.5"/><rect x="3.5" y="9.8" width="1.5" height="1.5"/></g><path d="M5.2 4.35H9.6M4.25 5.3V9.7" stroke="#8a8a8a" stroke-width="0.7" stroke-dasharray="1 0.7"/><path d="M5.4 10.8C8 10.4 10.4 8.2 10.9 5.3" fill="none" stroke="#555" stroke-width="0.9"/><path d="M9.6 14.6L13.6 10.6" stroke="#f2b230" stroke-width="2.5"/><path d="M13.4 10.8L14.9 9.3" stroke="#e83a3a" stroke-width="2.5" stroke-linecap="round"/><path d="M8.4 15.8L9 14L10.3 15.2Z" fill="#555"/></svg>
<div class="a" style="left:825px;top:753px;width:2px;height:5px;background:#cdcdcd;"></div>
<svg class="a" style="left:818px;top:734px" width="17" height="17" viewBox="0 0 17 17"><path d="M0.3 4.2L3.5 0.2H13L10 4.2Z" fill="#8ccaf5"/><path d="M0.3 4.2H10V13.6H0.3Z" fill="#68ade3"/><path d="M10 4.2L13 0.2V10.6L10 13.6Z" fill="#4a8fc6"/><path d="M0.3 13.6H10V16.2H0.3Z" fill="#b5b5b5"/><path d="M10 13.6L13 10.6V13.2L10 16.2Z" fill="#a0a0a0"/><path d="M14.4 13.2V2" stroke="#444" stroke-width="1"/><path d="M13.3 2.8L14.4 0.5L15.5 2.8Z" fill="#333"/></svg>
<div class="a" style="left:849px;top:753px;width:2px;height:5px;background:#cdcdcd;"></div>
<svg class="a" style="left:842px;top:734px" width="17" height="17" viewBox="0 0 17 17"><path d="M1.5 1H13.5M1.5 14H9M0.8 1.5V13.5M14 1.5V8.5" stroke="#c4c4c4" stroke-width="1.3"/><g fill="#1e8fe6"><rect x="0" y="0.2" width="1.7" height="1.7"/><rect x="13.2" y="0.2" width="1.7" height="1.7"/><rect x="0" y="13.2" width="1.7" height="1.7"/><rect x="3.5" y="3.6" width="1.5" height="1.5"/><rect x="9.7" y="3.6" width="1.5" height="1.5"/><rect x="3.5" y="9.8" width="1.5" height="1.5"/></g><path d="M5.2 4.35H9.6M4.25 5.3V9.7" stroke="#8a8a8a" stroke-width="0.7" stroke-dasharray="1 0.7"/><path d="M5.4 10.8C8 10.4 10.4 8.2 10.9 5.3" fill="none" stroke="#555" stroke-width="0.9"/><path d="M9.6 14.6L13.6 10.6" stroke="#f2b230" stroke-width="2.5"/><path d="M13.4 10.8L14.9 9.3" stroke="#e83a3a" stroke-width="2.5" stroke-linecap="round"/><path d="M8.4 15.8L9 14L10.3 15.2Z" fill="#555"/></svg>
<div class="a" style="left:873px;top:753px;width:2px;height:5px;background:#cdcdcd;"></div>
<svg class="a" style="left:866px;top:734px" width="17" height="17" viewBox="0 0 17 17"><path d="M0.3 4.2L3.5 0.2H13L10 4.2Z" fill="#8ccaf5"/><path d="M0.3 4.2H10V13.6H0.3Z" fill="#68ade3"/><path d="M10 4.2L13 0.2V10.6L10 13.6Z" fill="#4a8fc6"/><path d="M0.3 13.6H10V16.2H0.3Z" fill="#b5b5b5"/><path d="M10 13.6L13 10.6V13.2L10 16.2Z" fill="#a0a0a0"/><path d="M14.4 13.2V2" stroke="#444" stroke-width="1"/><path d="M13.3 2.8L14.4 0.5L15.5 2.8Z" fill="#333"/></svg>
<div class="a" style="left:897px;top:753px;width:2px;height:5px;background:#cdcdcd;"></div>
<svg class="a" style="left:890px;top:734px" width="17" height="17" viewBox="0 0 17 17"><path d="M0.6 4L4 0.6H15.6V12L12 15.7H0.6Z" fill="#dcdcdc"/><path d="M0.6 4L4 0.6H15.6L12 4Z" fill="#eeeeee"/><path d="M12 4L15.6 0.6V12L12 15.7Z" fill="#c8c8c8"/><path d="M0.6 4L4 0.6H15.6V12L12 15.7H0.6Z" fill="none" stroke="#4a4a4a" stroke-width="1.1" stroke-linejoin="round"/><rect x="1.6" y="8.6" width="8.6" height="3.8" rx="1.9" transform="rotate(-42 5.9 10.5)" fill="none" stroke="#6a6a6a" stroke-width="0.9"/><rect x="5.6" y="5" width="8.6" height="3.8" rx="1.9" transform="rotate(-42 9.9 6.9)" fill="none" stroke="#6a6a6a" stroke-width="0.9"/></svg>
<div class="a" style="left:921px;top:753px;width:2px;height:5px;background:#cdcdcd;"></div>
<svg class="a" style="left:914px;top:734px" width="17" height="17" viewBox="0 0 17 17"><path d="M1.5 1H13.5M1.5 14H9M0.8 1.5V13.5M14 1.5V8.5" stroke="#c4c4c4" stroke-width="1.3"/><g fill="#1e8fe6"><rect x="0" y="0.2" width="1.7" height="1.7"/><rect x="13.2" y="0.2" width="1.7" height="1.7"/><rect x="0" y="13.2" width="1.7" height="1.7"/><rect x="3.5" y="3.6" width="1.5" height="1.5"/><rect x="9.7" y="3.6" width="1.5" height="1.5"/><rect x="3.5" y="9.8" width="1.5" height="1.5"/></g><path d="M5.2 4.35H9.6M4.25 5.3V9.7" stroke="#8a8a8a" stroke-width="0.7" stroke-dasharray="1 0.7"/><path d="M5.4 10.8C8 10.4 10.4 8.2 10.9 5.3" fill="none" stroke="#555" stroke-width="0.9"/><path d="M9.6 14.6L13.6 10.6" stroke="#f2b230" stroke-width="2.5"/><path d="M13.4 10.8L14.9 9.3" stroke="#e83a3a" stroke-width="2.5" stroke-linecap="round"/><path d="M8.4 15.8L9 14L10.3 15.2Z" fill="#555"/></svg>
<div class="a" style="left:945px;top:753px;width:2px;height:5px;background:#cdcdcd;"></div>
<svg class="a" style="left:938px;top:734px" width="17" height="17" viewBox="0 0 17 17"><path d="M0.3 4.2L3.5 0.2H13L10 4.2Z" fill="#8ccaf5"/><path d="M0.3 4.2H10V13.6H0.3Z" fill="#68ade3"/><path d="M10 4.2L13 0.2V10.6L10 13.6Z" fill="#4a8fc6"/><path d="M0.3 13.6H10V16.2H0.3Z" fill="#b5b5b5"/><path d="M10 13.6L13 10.6V13.2L10 16.2Z" fill="#a0a0a0"/><path d="M14.4 13.2V2" stroke="#444" stroke-width="1"/><path d="M13.3 2.8L14.4 0.5L15.5 2.8Z" fill="#333"/></svg>
<div class="a" style="left:969px;top:753px;width:2px;height:5px;background:#cdcdcd;"></div>
<svg class="a" style="left:962px;top:734px" width="17" height="17" viewBox="0 0 17 17"><path d="M1.5 1H13.5M1.5 14H9M0.8 1.5V13.5M14 1.5V8.5" stroke="#c4c4c4" stroke-width="1.3"/><g fill="#1e8fe6"><rect x="0" y="0.2" width="1.7" height="1.7"/><rect x="13.2" y="0.2" width="1.7" height="1.7"/><rect x="0" y="13.2" width="1.7" height="1.7"/><rect x="3.5" y="3.6" width="1.5" height="1.5"/><rect x="9.7" y="3.6" width="1.5" height="1.5"/><rect x="3.5" y="9.8" width="1.5" height="1.5"/></g><path d="M5.2 4.35H9.6M4.25 5.3V9.7" stroke="#8a8a8a" stroke-width="0.7" stroke-dasharray="1 0.7"/><path d="M5.4 10.8C8 10.4 10.4 8.2 10.9 5.3" fill="none" stroke="#555" stroke-width="0.9"/><path d="M9.6 14.6L13.6 10.6" stroke="#f2b230" stroke-width="2.5"/><path d="M13.4 10.8L14.9 9.3" stroke="#e83a3a" stroke-width="2.5" stroke-linecap="round"/><path d="M8.4 15.8L9 14L10.3 15.2Z" fill="#555"/></svg>
<div class="a" style="left:993px;top:753px;width:2px;height:5px;background:#cdcdcd;"></div>
<svg class="a" style="left:986px;top:734px" width="17" height="17" viewBox="0 0 17 17"><path d="M0.3 4.2L3.5 0.2H13L10 4.2Z" fill="#8ccaf5"/><path d="M0.3 4.2H10V13.6H0.3Z" fill="#68ade3"/><path d="M10 4.2L13 0.2V10.6L10 13.6Z" fill="#4a8fc6"/><path d="M0.3 13.6H10V16.2H0.3Z" fill="#b5b5b5"/><path d="M10 13.6L13 10.6V13.2L10 16.2Z" fill="#a0a0a0"/><path d="M14.4 13.2V2" stroke="#444" stroke-width="1"/><path d="M13.3 2.8L14.4 0.5L15.5 2.8Z" fill="#333"/></svg>
<div class="a" style="left:1017px;top:753px;width:2px;height:5px;background:#cdcdcd;"></div>
<svg class="a" style="left:1010px;top:734px" width="17" height="17" viewBox="0 0 17 17"><path d="M0.3 4.2L3.5 0.2H13L10 4.2Z" fill="#8ccaf5"/><path d="M0.3 4.2H10V13.6H0.3Z" fill="#68ade3"/><path d="M10 4.2L13 0.2V10.6L10 13.6Z" fill="#4a8fc6"/><path d="M0.3 13.6H10V16.2H0.3Z" fill="#b5b5b5"/><path d="M10 13.6L13 10.6V13.2L10 16.2Z" fill="#a0a0a0"/><path d="M14.4 13.2V2" stroke="#444" stroke-width="1"/><path d="M13.3 2.8L14.4 0.5L15.5 2.8Z" fill="#333"/></svg>
<div class="a" style="left:1041px;top:753px;width:2px;height:5px;background:#cdcdcd;"></div>
<svg class="a" style="left:1034px;top:734px" width="17" height="17" viewBox="0 0 17 17"><path d="M0.3 4.2L3.5 0.2H13L10 4.2Z" fill="#8ccaf5"/><path d="M0.3 4.2H10V13.6H0.3Z" fill="#68ade3"/><path d="M10 4.2L13 0.2V10.6L10 13.6Z" fill="#4a8fc6"/><path d="M0.3 13.6H10V16.2H0.3Z" fill="#b5b5b5"/><path d="M10 13.6L13 10.6V13.2L10 16.2Z" fill="#a0a0a0"/><path d="M14.4 13.2V2" stroke="#444" stroke-width="1"/><path d="M13.3 2.8L14.4 0.5L15.5 2.8Z" fill="#333"/></svg>
<div class="a" style="left:1065px;top:753px;width:2px;height:5px;background:#cdcdcd;"></div>
<svg class="a" style="left:1058px;top:734px" width="17" height="17" viewBox="0 0 17 17"><path d="M0.5 4L4 0.6H10.5L7 4Z" fill="#f4f4f4"/><path d="M0.5 4H6A6.5 6.5 0 0 1 12.3 10.2V15.6H0.5Z" fill="#d9d9d9"/><path d="M12.3 10.2L15.7 7V12.4L12.3 15.6Z" fill="#c2c2c2"/><path d="M10 0.6A6.5 6.5 0 0 1 15.7 6.8L12.6 9.8A6.5 6.5 0 0 0 7 4.2Z" fill="#68ade3"/><path d="M10 0.6H4L0.5 4V15.6H12.3L15.7 12.4V7" fill="none" stroke="#777" stroke-width="0.9"/></svg>
<div class="a" style="left:1089px;top:753px;width:2px;height:5px;background:#cdcdcd;"></div>
<svg class="a" style="left:1082px;top:734px" width="17" height="17" viewBox="0 0 17 17"><path d="M0.3 4.2L3.5 0.2H13L10 4.2Z" fill="#8ccaf5"/><path d="M0.3 4.2H10V13.6H0.3Z" fill="#68ade3"/><path d="M10 4.2L13 0.2V10.6L10 13.6Z" fill="#4a8fc6"/><path d="M0.3 13.6H10V16.2H0.3Z" fill="#b5b5b5"/><path d="M10 13.6L13 10.6V13.2L10 16.2Z" fill="#a0a0a0"/><path d="M14.4 13.2V2" stroke="#444" stroke-width="1"/><path d="M13.3 2.8L14.4 0.5L15.5 2.8Z" fill="#333"/></svg>
<div class="a" style="left:1113px;top:753px;width:2px;height:5px;background:#cdcdcd;"></div>
<svg class="a" style="left:1106px;top:734px" width="17" height="17" viewBox="0 0 17 17"><path d="M7.6 3.2V12.8M3.2 7.6H12.8" stroke="#666" stroke-width="1.3"/><path d="M7.6 0.2L10 3.5H5.2Z M7.6 15.3L10 12H5.2Z M0.2 7.6L3.5 5.2V10Z M15.2 7.6L11.9 5.2V10Z" fill="#2a2a2a"/></svg>
<div class="a" style="left:1137px;top:753px;width:2px;height:5px;background:#cdcdcd;"></div>
<svg class="a" style="left:1130px;top:734px" width="17" height="17" viewBox="0 0 17 17"><path d="M0.6 4L4 0.6H15.6V12L12 15.7H0.6Z" fill="#dcdcdc"/><path d="M0.6 4L4 0.6H15.6L12 4Z" fill="#eeeeee"/><path d="M12 4L15.6 0.6V12L12 15.7Z" fill="#c8c8c8"/><path d="M0.6 4L4 0.6H15.6V12L12 15.7H0.6Z" fill="none" stroke="#4a4a4a" stroke-width="1.1" stroke-linejoin="round"/><rect x="1.6" y="8.6" width="8.6" height="3.8" rx="1.9" transform="rotate(-42 5.9 10.5)" fill="none" stroke="#6a6a6a" stroke-width="0.9"/><rect x="5.6" y="5" width="8.6" height="3.8" rx="1.9" transform="rotate(-42 9.9 6.9)" fill="none" stroke="#6a6a6a" stroke-width="0.9"/></svg>
<div class="a" style="left:1161px;top:753px;width:2px;height:5px;background:#cdcdcd;"></div>
<svg class="a" style="left:1154px;top:734px" width="17" height="17" viewBox="0 0 17 17"><path d="M1.5 1H13.5M1.5 14H9M0.8 1.5V13.5M14 1.5V8.5" stroke="#c4c4c4" stroke-width="1.3"/><g fill="#1e8fe6"><rect x="0" y="0.2" width="1.7" height="1.7"/><rect x="13.2" y="0.2" width="1.7" height="1.7"/><rect x="0" y="13.2" width="1.7" height="1.7"/><rect x="3.5" y="3.6" width="1.5" height="1.5"/><rect x="9.7" y="3.6" width="1.5" height="1.5"/><rect x="3.5" y="9.8" width="1.5" height="1.5"/></g><path d="M5.2 4.35H9.6M4.25 5.3V9.7" stroke="#8a8a8a" stroke-width="0.7" stroke-dasharray="1 0.7"/><path d="M5.4 10.8C8 10.4 10.4 8.2 10.9 5.3" fill="none" stroke="#555" stroke-width="0.9"/><path d="M9.6 14.6L13.6 10.6" stroke="#f2b230" stroke-width="2.5"/><path d="M13.4 10.8L14.9 9.3" stroke="#e83a3a" stroke-width="2.5" stroke-linecap="round"/><path d="M8.4 15.8L9 14L10.3 15.2Z" fill="#555"/></svg>
<div class="a" style="left:1185px;top:753px;width:2px;height:5px;background:#cdcdcd;"></div>
<svg class="a" style="left:1178px;top:734px" width="17" height="17" viewBox="0 0 17 17"><path d="M0.3 4.2L3.5 0.2H13L10 4.2Z" fill="#8ccaf5"/><path d="M0.3 4.2H10V13.6H0.3Z" fill="#68ade3"/><path d="M10 4.2L13 0.2V10.6L10 13.6Z" fill="#4a8fc6"/><path d="M0.3 13.6H10V16.2H0.3Z" fill="#b5b5b5"/><path d="M10 13.6L13 10.6V13.2L10 16.2Z" fill="#a0a0a0"/><path d="M14.4 13.2V2" stroke="#444" stroke-width="1"/><path d="M13.3 2.8L14.4 0.5L15.5 2.8Z" fill="#333"/></svg>
<div class="a" style="left:1209px;top:753px;width:2px;height:5px;background:#cdcdcd;"></div>
<svg class="a" style="left:1202px;top:734px" width="17" height="17" viewBox="0 0 17 17"><path d="M1.5 1H13.5M1.5 14H9M0.8 1.5V13.5M14 1.5V8.5" stroke="#c4c4c4" stroke-width="1.3"/><g fill="#1e8fe6"><rect x="0" y="0.2" width="1.7" height="1.7"/><rect x="13.2" y="0.2" width="1.7" height="1.7"/><rect x="0" y="13.2" width="1.7" height="1.7"/><rect x="3.5" y="3.6" width="1.5" height="1.5"/><rect x="9.7" y="3.6" width="1.5" height="1.5"/><rect x="3.5" y="9.8" width="1.5" height="1.5"/></g><path d="M5.2 4.35H9.6M4.25 5.3V9.7" stroke="#8a8a8a" stroke-width="0.7" stroke-dasharray="1 0.7"/><path d="M5.4 10.8C8 10.4 10.4 8.2 10.9 5.3" fill="none" stroke="#555" stroke-width="0.9"/><path d="M9.6 14.6L13.6 10.6" stroke="#f2b230" stroke-width="2.5"/><path d="M13.4 10.8L14.9 9.3" stroke="#e83a3a" stroke-width="2.5" stroke-linecap="round"/><path d="M8.4 15.8L9 14L10.3 15.2Z" fill="#555"/></svg>
<div class="a" style="left:1233px;top:753px;width:2px;height:5px;background:#cdcdcd;"></div>
<svg class="a" style="left:1226px;top:734px" width="17" height="17" viewBox="0 0 17 17"><path d="M0.3 4.2L3.5 0.2H13L10 4.2Z" fill="#8ccaf5"/><path d="M0.3 4.2H10V13.6H0.3Z" fill="#68ade3"/><path d="M10 4.2L13 0.2V10.6L10 13.6Z" fill="#4a8fc6"/><path d="M0.3 13.6H10V16.2H0.3Z" fill="#b5b5b5"/><path d="M10 13.6L13 10.6V13.2L10 16.2Z" fill="#a0a0a0"/><path d="M14.4 13.2V2" stroke="#444" stroke-width="1"/><path d="M13.3 2.8L14.4 0.5L15.5 2.8Z" fill="#333"/></svg>
<div class="a" style="left:1257px;top:753px;width:2px;height:5px;background:#cdcdcd;"></div>
<svg class="a" style="left:1250px;top:734px" width="17" height="17" viewBox="0 0 17 17"><path d="M1.5 1H13.5M1.5 14H9M0.8 1.5V13.5M14 1.5V8.5" stroke="#c4c4c4" stroke-width="1.3"/><g fill="#1e8fe6"><rect x="0" y="0.2" width="1.7" height="1.7"/><rect x="13.2" y="0.2" width="1.7" height="1.7"/><rect x="0" y="13.2" width="1.7" height="1.7"/><rect x="3.5" y="3.6" width="1.5" height="1.5"/><rect x="9.7" y="3.6" width="1.5" height="1.5"/><rect x="3.5" y="9.8" width="1.5" height="1.5"/></g><path d="M5.2 4.35H9.6M4.25 5.3V9.7" stroke="#8a8a8a" stroke-width="0.7" stroke-dasharray="1 0.7"/><path d="M5.4 10.8C8 10.4 10.4 8.2 10.9 5.3" fill="none" stroke="#555" stroke-width="0.9"/><path d="M9.6 14.6L13.6 10.6" stroke="#f2b230" stroke-width="2.5"/><path d="M13.4 10.8L14.9 9.3" stroke="#e83a3a" stroke-width="2.5" stroke-linecap="round"/><path d="M8.4 15.8L9 14L10.3 15.2Z" fill="#555"/></svg>
<div class="a" style="left:1281px;top:753px;width:2px;height:5px;background:#cdcdcd;"></div>
<svg class="a" style="left:1274px;top:734px" width="17" height="17" viewBox="0 0 17 17"><path d="M0.3 4.2L3.5 0.2H13L10 4.2Z" fill="#8ccaf5"/><path d="M0.3 4.2H10V13.6H0.3Z" fill="#68ade3"/><path d="M10 4.2L13 0.2V10.6L10 13.6Z" fill="#4a8fc6"/><path d="M0.3 13.6H10V16.2H0.3Z" fill="#b5b5b5"/><path d="M10 13.6L13 10.6V13.2L10 16.2Z" fill="#a0a0a0"/><path d="M14.4 13.2V2" stroke="#444" stroke-width="1"/><path d="M13.3 2.8L14.4 0.5L15.5 2.8Z" fill="#333"/></svg>
<div class="a" style="left:1305px;top:753px;width:2px;height:5px;background:#cdcdcd;"></div>
<div class="a" style="left:1298px;top:734px;width:17px;height:17px;opacity:0.3"><svg class="a" style="left:0px;top:0px" width="17" height="17" viewBox="0 0 17 17"><path d="M0.3 4.2L3.5 0.2H13L10 4.2Z" fill="#8ccaf5"/><path d="M0.3 4.2H10V13.6H0.3Z" fill="#68ade3"/><path d="M10 4.2L13 0.2V10.6L10 13.6Z" fill="#4a8fc6"/><path d="M0.3 13.6H10V16.2H0.3Z" fill="#b5b5b5"/><path d="M10 13.6L13 10.6V13.2L10 16.2Z" fill="#a0a0a0"/><path d="M14.4 13.2V2" stroke="#444" stroke-width="1"/><path d="M13.3 2.8L14.4 0.5L15.5 2.8Z" fill="#333"/></svg></div>
<svg class="a" style="left:1287px;top:727px" width="14" height="34" viewBox="0 0 14 34"><path d="M0.8 1H13V6.6L9.2 9.4H8.4V32.6H5.7V9.4H4.9L0.8 6.6Z" fill="#595959"/></svg>
<div class="a" style="left:1118px;top:719px;width:142px;height:6px;background:#c6c6c6;border-radius:3px"></div>
<svg class="a" style="left:1337px;top:739px" width="15" height="15" viewBox="0 0 14 14"><rect x="5.5" y="0" width="3" height="3.5" transform="rotate(0 7 7)" fill="#6d6d6d"/><rect x="5.5" y="0" width="3" height="3.5" transform="rotate(45 7 7)" fill="#6d6d6d"/><rect x="5.5" y="0" width="3" height="3.5" transform="rotate(90 7 7)" fill="#6d6d6d"/><rect x="5.5" y="0" width="3" height="3.5" transform="rotate(135 7 7)" fill="#6d6d6d"/><rect x="5.5" y="0" width="3" height="3.5" transform="rotate(180 7 7)" fill="#6d6d6d"/><rect x="5.5" y="0" width="3" height="3.5" transform="rotate(225 7 7)" fill="#6d6d6d"/><rect x="5.5" y="0" width="3" height="3.5" transform="rotate(270 7 7)" fill="#6d6d6d"/><rect x="5.5" y="0" width="3" height="3.5" transform="rotate(315 7 7)" fill="#6d6d6d"/><circle cx="7" cy="7" r="4.8" fill="#6d6d6d"/><circle cx="7" cy="7" r="2" fill="#f0f0f0"/></svg>
<div class="a" style="left:565px;top:688px;width:237px;height:24px;background:#f0f0f0;"></div>
<svg class="a" style="left:566px;top:689px" width="20" height="21" viewBox="0 0 20 21"><path d="M2.2 11.3C4 9 8 8.6 12 8.7C16 8.9 17.8 10.2 17.5 11.8C17.2 13.5 14.5 14.3 12.2 14.4" fill="none" stroke="#222" stroke-width="1.1"/><rect x="9.2" y="5.6" width="2.8" height="13" fill="#fff" stroke="#2a2a2a" stroke-width="1"/><path d="M8 5.9L10.6 3L13.2 5.9Z" fill="#fff" stroke="#2a2a2a" stroke-width="0.9" stroke-linejoin="round"/><path d="M6.2 14.4H12.4" stroke="#222" stroke-width="1.1"/><path d="M3.8 14.4L7.2 12V16.8Z" fill="#222"/></svg>
<svg class="a" style="left:589px;top:698px" width="6" height="4" viewBox="0 0 6 4"><path d="M0 0H6L3 4Z" fill="#333"/></svg>
<svg class="a" style="left:600px;top:691px" width="18" height="18" viewBox="0 0 18 18"><path d="M1.6 6.2L6.4 1.6L7.9 4L12.3 2.5L13.6 2.9V6.2Z" fill="#a4a9b0" stroke="#333" stroke-width="0.9" stroke-linejoin="round"/><rect x="1.1" y="6.2" width="15.6" height="10.5" rx="1.2" fill="#fff" stroke="#333" stroke-width="1.3"/><rect x="4.2" y="9" width="9.6" height="4.9" fill="#c9ced6" stroke="#333" stroke-width="1.3"/></svg>
<svg class="a" style="left:626px;top:690px" width="18" height="19" viewBox="0 0 18 19"><path d="M5.5 17.5C4 15.5 2 12.5 1.2 11C0.6 10 1.6 9 2.7 9.7L5 11.6L4.3 4.6C4.2 3.5 5.9 3.3 6.1 4.4L7 9.2L7.2 2.7C7.3 1.6 9.1 1.6 9.1 2.7L9.4 9L10.4 3.5C10.6 2.4 12.2 2.6 12.1 3.7L11.6 9.6L13.1 6.3C13.5 5.4 14.9 5.8 14.7 6.8L13.7 12C13.2 14.8 12.3 16.6 11.3 17.5Z" fill="#f0f1f3" stroke="#2a2a2a" stroke-width="1" stroke-linejoin="round"/></svg>
<svg class="a" style="left:652px;top:690px" width="18" height="18" viewBox="0 0 18 18"><circle cx="5.9" cy="8.8" r="4.9" fill="#e2eff3" stroke="#2f2f2f" stroke-width="1.3"/><path d="M9.4 12.3L12.4 15.3" stroke="#333" stroke-width="3" stroke-linecap="round"/><path d="M14.7 2.2V6.6M12.4 4.4H17M12.4 8.4H17" stroke="#2f2f2f" stroke-width="1"/></svg>
<svg class="a" style="left:678px;top:690px" width="18" height="18" viewBox="0 0 18 18"><rect x="1.3" y="2.3" width="15.5" height="15.1" fill="none" stroke="#444" stroke-width="0.9" stroke-dasharray="1.6 1.4"/><circle cx="7.2" cy="8.5" r="6" fill="#e2eff3" stroke="#2f2f2f" stroke-width="1.3"/><path d="M11.6 12.5L15.6 16.3" stroke="#333" stroke-width="3" stroke-linecap="round"/></svg>
<svg class="a" style="left:700px;top:698px" width="6" height="4" viewBox="0 0 6 4"><path d="M0 0H6L3 4Z" fill="#333"/></svg>
<svg class="a" style="left:711px;top:691px" width="18" height="18" viewBox="0 0 18 18"><defs><linearGradient id="scr" x1="0" y1="0" x2="0" y2="1"><stop offset="0" stop-color="#bcd3ee"/><stop offset="1" stop-color="#94b4dc"/></linearGradient></defs><rect x="1.4" y="1.2" width="15" height="12.5" rx="1.5" fill="#fff" stroke="#333" stroke-width="1"/><rect x="3.1" y="3" width="11.6" height="8.5" rx="1" fill="url(#scr)" stroke="#294777" stroke-width="1.2"/><path d="M5.2 13.7L5 15.6Q5 16.4 5.8 16.4H12.2Q13 16.4 12.9 15.6L12.7 13.7" fill="#fff" stroke="#333" stroke-width="0.9"/></svg>
<svg class="a" style="left:730px;top:698px" width="6" height="4" viewBox="0 0 6 4"><path d="M0 0H6L3 4Z" fill="#333"/></svg>
<svg class="a" style="left:742px;top:691px" width="18" height="18" viewBox="0 0 18 18"><defs><linearGradient id="grd" x1="0" y1="0" x2="0" y2="1"><stop offset="0" stop-color="#d0d0d0"/><stop offset="1" stop-color="#6a6e76"/></linearGradient></defs><rect x="1.1" y="1.1" width="15.8" height="15.8" rx="1.6" fill="url(#grd)" stroke="#444" stroke-width="1"/><rect x="1.60" y="1.60" width="2.2" height="2.2" fill="#f4f4f4"/><rect x="1.60" y="4.65" width="2.2" height="2.2" fill="#f4f4f4"/><rect x="1.60" y="7.70" width="2.2" height="2.2" fill="#f4f4f4"/><rect x="1.60" y="10.75" width="2.2" height="2.2" fill="#f4f4f4"/><rect x="1.60" y="13.80" width="2.2" height="2.2" fill="#f4f4f4"/><rect x="4.65" y="1.60" width="2.2" height="2.2" fill="#f4f4f4"/><rect x="4.65" y="4.65" width="2.2" height="2.2" fill="#f4f4f4"/><rect x="4.65" y="7.70" width="2.2" height="2.2" fill="#f4f4f4"/><rect x="4.65" y="10.75" width="2.2" height="2.2" fill="#f4f4f4"/><rect x="4.65" y="13.80" width="2.2" height="2.2" fill="#f4f4f4"/><rect x="7.70" y="1.60" width="2.2" height="2.2" fill="#f4f4f4"/><rect x="7.70" y="4.65" width="2.2" height="2.2" fill="#f4f4f4"/><rect x="7.70" y="7.70" width="2.2" height="2.2" fill="#f4f4f4"/><rect x="7.70" y="10.75" width="2.2" height="2.2" fill="#f4f4f4"/><rect x="7.70" y="13.80" width="2.2" height="2.2" fill="#f4f4f4"/><rect x="10.75" y="1.60" width="2.2" height="2.2" fill="#f4f4f4"/><rect x="10.75" y="4.65" width="2.2" height="2.2" fill="#f4f4f4"/><rect x="10.75" y="7.70" width="2.2" height="2.2" fill="#f4f4f4"/><rect x="10.75" y="10.75" width="2.2" height="2.2" fill="#f4f4f4"/><rect x="10.75" y="13.80" width="2.2" height="2.2" fill="#f4f4f4"/><rect x="13.80" y="1.60" width="2.2" height="2.2" fill="#f4f4f4"/><rect x="13.80" y="4.65" width="2.2" height="2.2" fill="#f4f4f4"/><rect x="13.80" y="7.70" width="2.2" height="2.2" fill="#f4f4f4"/><rect x="13.80" y="10.75" width="2.2" height="2.2" fill="#f4f4f4"/><rect x="13.80" y="13.80" width="2.2" height="2.2" fill="#f4f4f4"/></svg>
<svg class="a" style="left:761px;top:698px" width="6" height="4" viewBox="0 0 6 4"><path d="M0 0H6L3 4Z" fill="#333"/></svg>
<svg class="a" style="left:773px;top:692px" width="17" height="15" viewBox="0 0 17 15"><g fill="#b9d1ee" stroke="#2a4878" stroke-width="1.1"><rect x="1.1" y="1" width="7" height="6.2" rx="1.2"/><rect x="8.1" y="1" width="7.3" height="6.2" rx="1.2"/><rect x="1.1" y="7.2" width="7" height="6.5" rx="1.2"/><rect x="8.1" y="7.2" width="7.3" height="6.5" rx="1.2"/></g><g fill="#9fbde2"><rect x="3" y="3" width="3.2" height="2.2"/><rect x="10" y="3" width="3.4" height="2.2"/><rect x="3" y="9.3" width="3.2" height="2.3"/><rect x="10" y="9.3" width="3.4" height="2.3"/></g></svg>
<svg class="a" style="left:792px;top:698px" width="6" height="4" viewBox="0 0 6 4"><path d="M0 0H6L3 4Z" fill="#333"/></svg>
<svg class="a" style="left:1337px;top:693px" width="17" height="17" viewBox="0 0 17 17"><path d="M8.4 0.2A8.2 8.2 0 1 0 8.4 16.6H16.8V8.4A8.2 8.2 0 0 0 8.4 0.2Z" fill="#050505"/><path d="M3.6 8.3L7 5.2L8.4 7.2L11.6 4.5M4.6 10.3L7.8 7.4L9.2 9.4L12.4 6.6" fill="none" stroke="#f0f0f0" stroke-width="0.9"/></svg>
<svg class="a" style="left:1280px;top:150px" width="86" height="75" viewBox="0 0 86 75"><defs><linearGradient id="vc" x1="0" y1="0" x2="0" y2="1"><stop offset="0" stop-color="#eeeeee"/><stop offset="1" stop-color="#dddddd"/></linearGradient><radialGradient id="vsh" cx="0.5" cy="0.5" r="0.5"><stop offset="0" stop-color="#000" stop-opacity="0.18"/><stop offset="1" stop-color="#000" stop-opacity="0"/></radialGradient></defs><ellipse cx="29" cy="65.5" rx="30" ry="4.5" fill="url(#vsh)"/><rect x="12.5" y="21.5" width="42" height="42" fill="url(#vc)" stroke="#777" stroke-width="0.8"/><rect x="19" y="29" width="28" height="27" fill="#d9dbde" opacity="0.6"/><path d="M12 14V64.5" stroke="#4444e8" stroke-width="1.6"/><path d="M12 64.5H62.5" stroke="#ee5555" stroke-width="1.6"/><path d="M8.5 4H14.5L8.5 11.5H14.8" fill="none" stroke="#5858ea" stroke-width="1.3"/><path d="M65.5 60.5L70.5 68.5M70.5 60.5L65.5 68.5" stroke="#f06a6a" stroke-width="1.2"/><text x="18.7" y="47.4" font-family="Liberation Sans" font-weight="bold" font-size="12.8" textLength="30" lengthAdjust="spacingAndGlyphs" fill="#878a8f">FRONT</text></svg>
<svg class="a" style="left:600px;top:210px" width="400" height="400" viewBox="0 0 400 400"><defs><linearGradient id="bd" gradientUnits="userSpaceOnUse" x1="0" y1="20" x2="0" y2="398"><stop offset="0" stop-color="#98958e"/><stop offset="1" stop-color="#8a8881"/></linearGradient><linearGradient id="lb" gradientUnits="userSpaceOnUse" x1="0" y1="92" x2="0" y2="101.6"><stop offset="0" stop-color="#8d8a83"/><stop offset="0.5" stop-color="#5e5b55"/><stop offset="1" stop-color="#3e3c38"/></linearGradient></defs><path d="M8 397.7V19.75A9.5 9.5 0 0 1 17.5 10.25H384.7A10 10 0 0 1 394.7 20.25V91.6A10 10 0 0 1 384.7 101.6H283.7V397.7Z" fill="#7c786f"/><path d="M12 12H388V15.7H12Z" fill="#a8a194"/><path d="M14 15.8H388V17.5H14Z" fill="#7d786e"/><path d="M16 17.6H386V20.4H16Z" fill="#f3f2ee"/><path d="M8 20V397.7H11Z" fill="#76736c"/><rect x="8" y="20.4" width="3" height="377.3" fill="#74716a"/><rect x="11" y="20.4" width="2.5" height="377.3" fill="#8d8a84"/><rect x="13.5" y="20.4" width="3.3" height="377.3" fill="#94928b"/><path d="M16.8 20.4H385V92.2H274.3V397.7H16.8Z" fill="url(#bd)"/><rect x="385" y="20.4" width="3" height="71.8" fill="#94918b"/><rect x="388" y="20.4" width="4" height="73" fill="#a09e98"/><path d="M392 20.4H394.7V91.6A10 10 0 0 1 392 98.5Z" fill="#6e6c67"/><path d="M274.3 92.2H394.2A9.5 9.5 0 0 1 384.7 101.6H283.7Z" fill="url(#lb)"/><path d="M274.3 92.2L277.2 95.1V397.7H274.3Z" fill="#908d86"/><path d="M277.2 95.1L280.8 98.7V397.7H277.2Z" fill="#a3a09a"/><path d="M280.8 98.7L283.7 101.6V397.7H280.8Z" fill="#7d7b75"/><circle cx="173.7" cy="102.2" r="21.9" fill="#8e2424"/><circle cx="340" cy="46.9" r="17" fill="#6e6c68"/></svg>
</body></html>
